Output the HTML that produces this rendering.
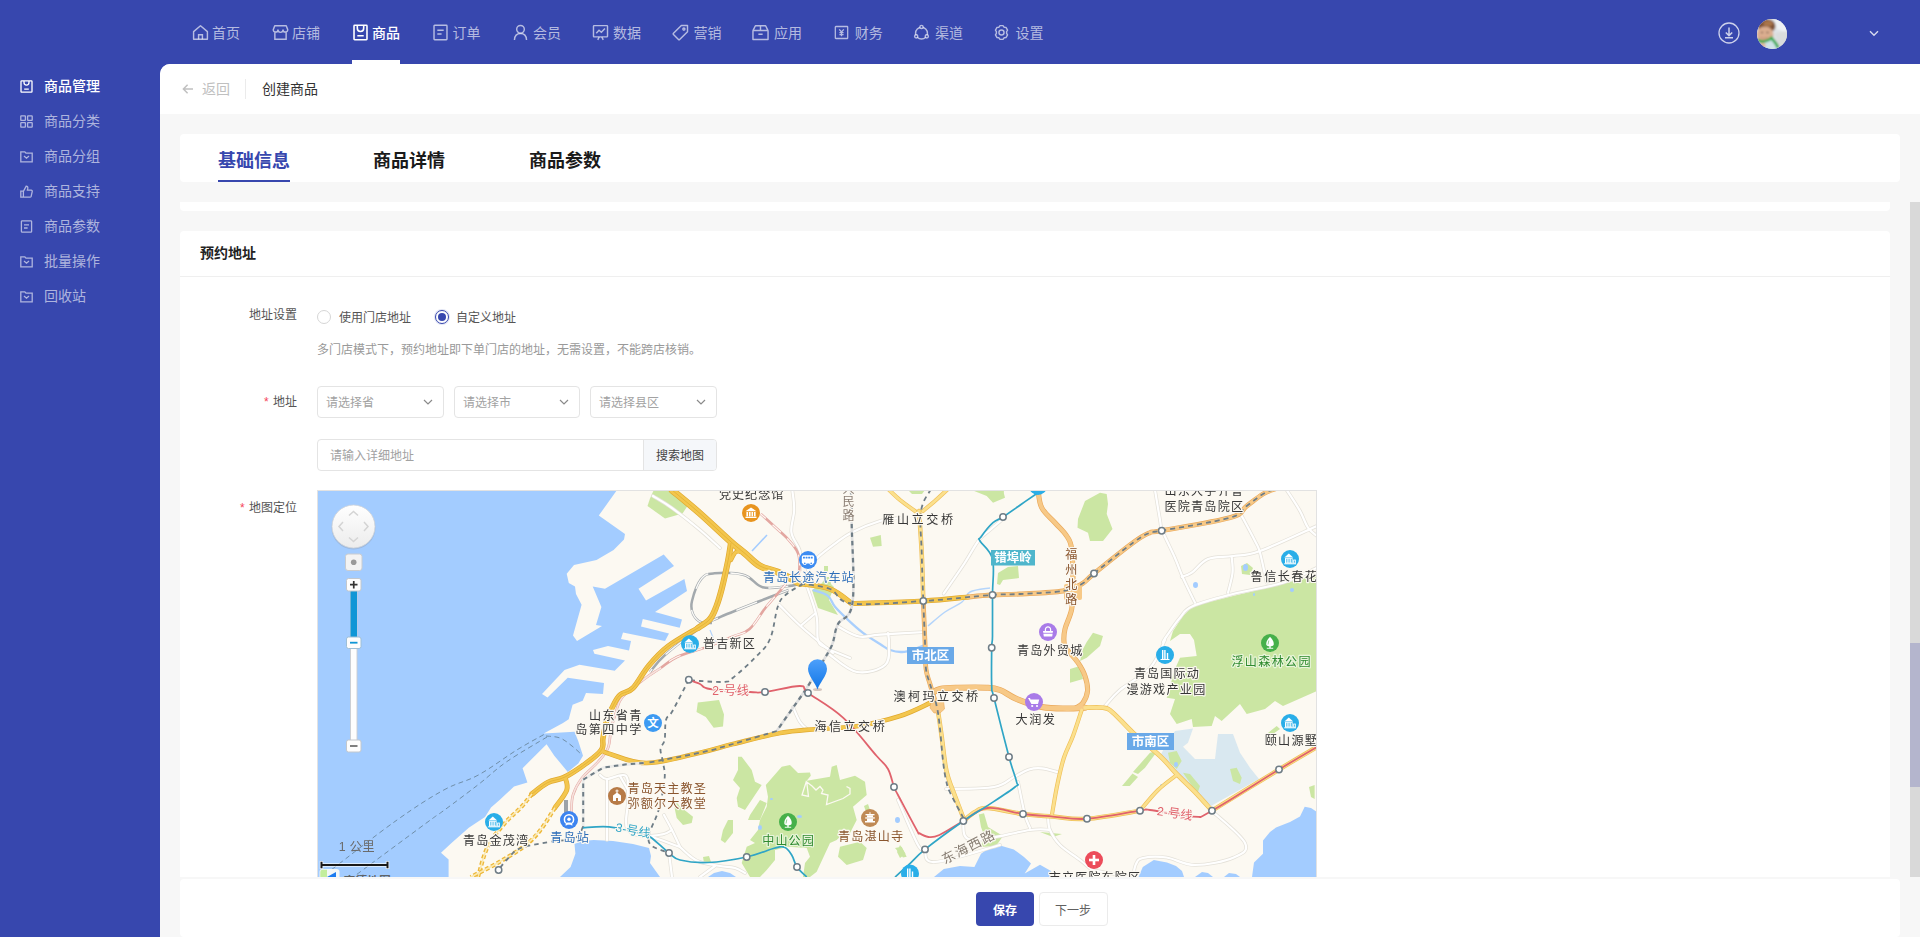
<!DOCTYPE html>
<html lang="zh-CN">
<head>
<meta charset="utf-8">
<title>创建商品</title>
<style>
*{box-sizing:border-box;margin:0;padding:0}
html,body{width:1920px;height:937px;overflow:hidden}
body{font-family:"Liberation Sans","Noto Sans CJK SC",sans-serif;background:#3747ae;position:relative;font-size:14px;color:#333}
.abs{position:absolute}
#hdr{position:absolute;left:0;top:0;width:1920px;height:64px;background:#3747ae}
#side{position:absolute;left:0;top:64px;width:160px;height:873px;background:#3747ae}
#main{position:absolute;left:160px;top:64px;width:1760px;height:873px;background:#f7f7f7;border-top-left-radius:10px;overflow:hidden}
.nav{position:absolute;top:0;height:64px;line-height:64px;color:rgba(255,255,255,.64);font-size:14px;white-space:nowrap}
.nav svg{position:absolute;left:-.5px;top:23.500px;width:17px;height:17px;fill:none;stroke:rgba(255,255,255,.64);stroke-width:1.350}
.nav span{position:absolute;left:20px;top:1px}
.nav.on{color:#fff;font-weight:500}
.nav.on svg{stroke:#fff;stroke-width:1.500}
.sitem{position:absolute;left:0;width:160px;height:35px;line-height:35px;color:rgba(255,255,255,.6);font-size:14px}
.sitem svg{position:absolute;left:20px;top:11px;width:13px;height:13px;fill:none;stroke:rgba(255,255,255,.6);stroke-width:1.300}
.sitem span{position:absolute;left:44px;top:0}
.sitem.on{color:#fff;font-weight:500}
.sitem.on svg{stroke:#fff}

.tab{position:absolute;top:84px;font-size:18px;line-height:26px;font-weight:700;color:#1a1a1a;white-space:nowrap}
.tab.on{color:#3747ae}
.lbl{position:absolute;left:0;width:137px;text-align:right;font-size:12px;line-height:20px;color:#555;white-space:nowrap}
.lbl i{font-style:normal;color:#f5455a;margin-right:1px}
.t12{position:absolute;font-size:12px;line-height:20px;white-space:nowrap}
.radio{position:absolute;width:14px;height:14px;border:1px solid #d6d6d6;border-radius:50%;background:#fff}
.radio.on{border:1px solid #3747ae;box-shadow:0 0 0 1px rgba(55,71,174,.15)}
.radio.on::after{content:"";position:absolute;left:2px;top:2px;width:8px;height:8px;border-radius:50%;background:#3747ae}
.sel{position:absolute;top:322px;width:126px;height:32px;border:1px solid #e4e4e4;border-radius:4px;background:#fff;font-size:12px;line-height:33px;padding-left:8px;color:#a2a2a2;white-space:nowrap}
.sel svg{position:absolute;right:10px;top:12px;width:10px;height:6px;fill:none;stroke:#8a8a8a;stroke-width:1.200}
</style>
</head>
<body>
<div id="hdr">
  <div class="nav" style="left:192px"><svg viewBox="0 0 16 16"><path d="M1.5 7.2 8 1.6l6.500 5.600V14.300H1.500Z" stroke-linejoin="round"/><path d="M6.200 14.300V10.200h3.600v4.100"/></svg><span>首页</span></div>
  <div class="nav" style="left:272px"><svg viewBox="0 0 16 16"><path d="M2.600 1.700h10.800l1.400 3.600a2.200 2.200 0 0 1-4.400.2 2.400 2.400 0 0 1-4.800 0 2.200 2.200 0 0 1-4.400-.2Z" stroke-linejoin="round"/><path d="M2.700 8v6.300h10.600V8"/></svg><span>店铺</span></div>
  <div class="nav on" style="left:352px"><svg viewBox="0 0 16 16"><rect x="1.900" y="1.200" width="12.200" height="13.600" rx=".6"/><path d="M5 1.600v2.400a3 3 0 0 0 6 0V1.600M5 11h6"/></svg><span>商品</span></div>
  <div class="nav" style="left:432px"><svg viewBox="0 0 16 16"><rect x="1.900" y="1.200" width="12.200" height="13.600" rx=".6"/><path d="M5 5.800h6M5 9.400h4"/></svg><span style="left:20.5px">订单</span></div>
  <div class="nav" style="left:512px"><svg viewBox="0 0 16 16"><circle cx="8" cy="5" r="3.600"/><path d="M2.300 15c.2-3.800 2.400-6.000 5.700-6.000s5.500 2.200 5.700 6.000"/></svg><span style="left:21px">会员</span></div>
  <div class="nav" style="left:592px"><svg viewBox="0 0 16 16"><rect x="1.400" y="1.500" width="13.200" height="10.600" rx=".6"/><path d="M4 8.600 6.600 5.800l2.200 2 3.400-3.600M5.400 15l1.400-2.800M10.600 15l-1.400-2.800"/></svg><span style="left:21px">数据</span></div>
  <div class="nav" style="left:672px"><svg viewBox="0 0 16 16"><path d="M8.800 1.400h5.800v5.800l-7.400 7.400a.8.800 0 0 1-1.100 0L1.400 9.900a.8.800 0 0 1 0-1.100Z" stroke-linejoin="round"/><circle cx="11.200" cy="4.800" r="1"/></svg><span style="left:21.5px">营销</span></div>
  <div class="nav" style="left:752px"><svg viewBox="0 0 16 16"><path d="M.9 6.200h14.200v8.400H.9ZM.9 6.200 3.200 1.600h9.600l2.300 4.600M8 1.600v4.600M6 9.600h4" stroke-linejoin="round"/></svg><span style="left:22px">应用</span></div>
  <div class="nav" style="left:834px"><svg viewBox="0 0 16 16" style="width:15px;height:15px;top:24.500px"><rect x="1.400" y="1.600" width="13.200" height="12.800" rx=".6"/><path d="M5.600 4.600 8 7.400l2.400-2.800M8 7.400v4.600M5.800 8.200h4.400M5.800 10.200h4.400"/></svg><span style="left:20.700px">财务</span></div>
  <div class="nav" style="left:913px"><svg viewBox="0 0 16 16"><circle cx="8" cy="8.600" r="5.600"/><circle cx="8" cy="2.800" r="1.500" fill="#3747ae"/><circle cx="3" cy="11.600" r="1.500" fill="#3747ae"/><circle cx="13" cy="11.600" r="1.500" fill="#3747ae"/></svg><span style="left:22px">渠道</span></div>
  <div class="nav" style="left:993px"><svg viewBox="0 0 16 16"><path d="M6.600 1.500h2.800l1 1.500 1.800.2 1.500 2.500-.9 1.500v1.600l.9 1.500-1.500 2.500-1.800.2-1 1.500H6.600l-1-1.500-1.800-.2-1.500-2.500.9-1.500V7.200l-.9-1.500 1.500-2.500 1.800-.2Z" stroke-linejoin="round"/><circle cx="8" cy="8" r="2.400"/></svg><span style="left:22.500px">设置</span></div>
  <div class="abs" style="left:352px;top:60px;width:48px;height:4px;background:#fff"></div>
  <svg class="abs" style="left:1718px;top:22px" width="22" height="22" viewBox="0 0 22 22" fill="none" stroke="rgba(255,255,255,.75)" stroke-width="1.300"><circle cx="11" cy="11" r="10"/><path d="M11 5.500v8M7.800 10.500 11 13.600l3.200-3.100M7 15.800h8" stroke-width="1.500"/></svg>
  <svg class="abs" style="left:1757px;top:19px" width="30" height="30" viewBox="0 0 30 30"><defs><clipPath id="av"><circle cx="15" cy="15" r="15"/></clipPath><filter id="bl" x="-10%" y="-10%" width="120%" height="120%"><feGaussianBlur stdDeviation=".9"/></filter></defs><g clip-path="url(#av)"><rect width="30" height="30" fill="#dde1e4"/><g filter="url(#bl)"><rect x="-2" y="-2" width="34" height="34" fill="#dfe3e6"/><path d="M16 -2 L32 -2 L32 14 L20 10Z" fill="#eef1f5"/><path d="M18 14 L32 12 L32 32 L22 32Z" fill="#d9dcdc"/><ellipse cx="9.500" cy="7" rx="9" ry="7" fill="#7b5036"/><ellipse cx="11" cy="4.500" rx="5" ry="3" fill="#a9744a"/><ellipse cx="8" cy="15.500" rx="8.500" ry="8" fill="#dcae90"/><ellipse cx="5" cy="13.500" rx="1.200" ry=".8" fill="#5a4434"/><ellipse cx="10.500" cy="13.500" rx="1.200" ry=".8" fill="#5a4434"/><path d="M3 18.500 q4 2 8 0" stroke="#b9806a" stroke-width=".8" fill="none"/><path d="M5 25 L15 20 L22 30 L8 31Z" fill="#cfe4e8"/><path d="M0 21 C5 24 11 22 14.500 19 C17 22 20 25 21 29" stroke="#22a744" stroke-width="2.800" fill="none"/><ellipse cx="5.500" cy="26.500" rx="3.200" ry="2.800" fill="#e2b79c"/></g></g></svg>
  <svg class="abs" style="left:1869px;top:30px" width="10" height="7" viewBox="0 0 10 7" fill="none" stroke="rgba(255,255,255,.8)" stroke-width="1.400"><path d="M1 1.200 5 5.200l4-4"/></svg>
</div>
<div id="side">
  <div class="sitem on" style="top:5px"><svg viewBox="0 0 13 13"><rect x="1" y=".8" width="11" height="11.400" rx=".6"/><path d="M4 1v1.600a2.500 2.500 0 0 0 5 0V1M4.200 9.200h4.600"/></svg><span>商品管理</span></div>
  <div class="sitem" style="top:40px"><svg viewBox="0 0 13 13"><rect x=".8" y=".8" width="4.600" height="4.600" rx=".5"/><rect x="7.600" y=".8" width="4.600" height="4.600" rx=".5"/><rect x=".8" y="7.600" width="4.600" height="4.600" rx=".5"/><rect x="7.600" y="7.600" width="4.600" height="4.600" rx=".5"/></svg><span>商品分类</span></div>
  <div class="sitem" style="top:75px"><svg viewBox="0 0 13 13"><path d="M.8 1.800h4l1.200 1.400h6.200v8.600H.8ZM4 6.000l2.500 2.200L9 6.000"/></svg><span>商品分组</span></div>
  <div class="sitem" style="top:110px"><svg viewBox="0 0 13 13"><path d="M.8 6.200h2.600v6H.8ZM3.400 6.400 6.200 1.200c1.200 0 1.800.8 1.600 2L7.400 5.200h3.800c.8 0 1.200.6 1 1.400l-1 4.600c-.2.700-.6 1-1.300 1H3.400"/></svg><span>商品支持</span></div>
  <div class="sitem" style="top:145px"><svg viewBox="0 0 13 13"><rect x="1.400" y=".8" width="10.200" height="11.400" rx=".8"/><path d="M4 4.800h5M4 8.000h3.600"/></svg><span>商品参数</span></div>
  <div class="sitem" style="top:180px"><svg viewBox="0 0 13 13"><path d="M.8 1.800h4l1.200 1.400h6.200v8.600H.8ZM4 6.000l2.500 2.200L9 6.000"/></svg><span>批量操作</span></div>
  <div class="sitem" style="top:215px"><svg viewBox="0 0 13 13"><path d="M.8 1.800h4l1.200 1.400h6.200v8.600H.8ZM4 6.000l2.500 2.200L9 6.000"/></svg><span>回收站</span></div>
</div>
<div id="main">
  <div class="abs" style="left:0;top:0;width:1760px;height:50px;background:#fff"></div>
  <svg class="abs" style="left:22px;top:19px" width="12" height="12" viewBox="0 0 12 12" fill="none" stroke="#c0c0c0" stroke-width="1.500"><path d="M11 6H1.600M5.600 1.800 1.400 6l4.200 4.200"/></svg>
  <div class="abs" style="left:42px;top:15px;font-size:14px;line-height:20px;color:#c0c0c0">返回</div>
  <div class="abs" style="left:85px;top:15px;width:1px;height:20px;background:#ebebeb"></div>
  <div class="abs" style="left:102px;top:15px;font-size:14px;line-height:20px;color:#333">创建商品</div>

  <div class="abs" style="left:20px;top:70px;width:1720px;height:48px;background:#fff;border-radius:4px"></div>
  <div class="tab on" style="left:58px">基础信息</div>
  <div class="tab" style="left:213px">商品详情</div>
  <div class="tab" style="left:369px">商品参数</div>
  <div class="abs" style="left:58px;top:116px;width:72px;height:2px;background:#3747ae"></div>

  <div class="abs" style="left:20px;top:138px;width:1710px;height:9px;background:#fff;border-radius:0 0 4px 4px"></div>
  <div class="abs" style="left:20px;top:167px;width:1710px;height:660px;background:#fff;border-radius:4px 4px 0 0"></div>
  <div class="abs" style="left:40px;top:179px;font-size:14px;line-height:20px;font-weight:700;color:#222">预约地址</div>
  <div class="abs" style="left:20px;top:212px;width:1710px;height:1px;background:#efefef"></div>

  <div class="lbl" style="top:241px">地址设置</div>
  <div class="radio" style="left:157px;top:246px"></div>
  <div class="t12" style="left:179px;top:244px;color:#555">使用门店地址</div>
  <div class="radio on" style="left:275px;top:246px"></div>
  <div class="t12" style="left:296px;top:244px;color:#555">自定义地址</div>
  <div class="t12" style="left:157px;top:276px;color:#999">多门店模式下，预约地址即下单门店的地址，无需设置，不能跨店核销。</div>

  <div class="lbl" style="top:328px"><i>*</i> 地址</div>
  <div class="sel" style="left:157px;width:127px">请选择省<svg viewBox="0 0 10 6"><path d="M1 1l4 4 4-4"/></svg></div>
  <div class="sel" style="left:294px;width:126px">请选择市<svg viewBox="0 0 10 6"><path d="M1 1l4 4 4-4"/></svg></div>
  <div class="sel" style="left:430px;width:127px">请选择县区<svg viewBox="0 0 10 6"><path d="M1 1l4 4 4-4"/></svg></div>

  <div class="abs" style="left:157px;top:375px;width:400px;height:32px;border:1px solid #e4e4e4;border-radius:4px;background:#fff;overflow:hidden">
    <div class="t12" style="left:12px;top:6px;color:#a2a2a2">请输入详细地址</div>
    <div class="abs" style="left:325px;top:0;width:73px;height:30px;background:#f5f7fa;border-left:1px solid #e4e4e4;font-size:12px;line-height:32px;text-align:center;color:#444">搜索地图</div>
  </div>

  <div class="lbl" style="top:434px"><i>*</i> 地图定位</div>
  <div class="abs" style="left:157px;top:426px;width:1000px;height:387px;overflow:hidden;background:#fcf9f2">
<svg width="1000" height="387" viewBox="317 490 1000 387" style="position:absolute;left:0;top:0;font-family:'Liberation Sans','Noto Sans CJK SC',sans-serif">
<rect x="317" y="490" width="1000" height="387" fill="#fcf9f2"/>
<path d="M317.0 490.0 L617.0 490.0 L598.8 515.5 L625.0 534.0 L624.0 539.6 L613.6 550.0 L596.5 560.0 L574.0 565.0 L566.7 573.7 L568.8 583.0 L575.0 586.5 L576.0 594.0 L581.6 604.7 L573.0 635.6 L577.0 641.0 L602.0 626.0 L596.0 625.0 L601.4 607.0 L592.7 586.5 L605.0 588.7 L663.7 554.5 L674.0 566.0 L638.5 588.7 L646.0 600.4 L684.4 579.0 L687.0 591.0 L655.0 612.0 L682.0 619.6 L679.7 627.7 L642.8 619.0 L641.0 626.4 L669.0 633.5 L665.0 641.0 L623.0 632.4 L621.0 639.0 L631.0 641.0 L629.0 650.5 L608.0 646.0 L593.0 650.0 L594.4 653.7 L625.0 660.5 L614.7 670.8 L579.5 664.8 L564.5 670.0 L542.0 694.0 L547.5 697.5 L567.7 677.8 L604.0 683.0 L603.0 694.0 L586.0 693.0 L582.7 700.7 L572.6 704.8 L568.7 719.2 L563.0 723.0 L543.7 733.6 L574.5 731.7 L578.3 741.3 L583.0 755.7 L578.3 763.4 L567.8 772.0 L554.3 755.7 L546.6 744.2 L522.6 768.2 L527.4 782.6 L514.0 786.5 L499.6 800.0 L491.0 807.6 L485.0 817.0 L468.8 827.8 L451.5 843.0 L441.0 852.7 L448.6 859.5 L448.6 877.0 L317.0 877.0Z" fill="#a3ccff"/>
<path d="M574.5 844.0 L582.0 841.0 L593.7 840.0 L613.0 841.0 L633.0 844.0 L649.0 848.0 L651.0 856.0 L650.0 863.0 L660.0 877.0 L560.0 877.0 L570.6 867.0 L575.4 853.7Z" fill="#a3ccff"/>
<path d="M708 877 L714 873 L722 871 L730 873 L736 877Z" fill="#a3ccff"/>
<path d="M934.0 877.0 L943.8 869.0 L960.0 866.0 L974.4 867.0 L981.0 853.8 L989.0 848.0 L998.4 845.0 L1013.8 849.4 L1024.0 857.0 L1031.0 863.6 L1024.7 873.5 L1040.0 864.7 L1051.0 871.0 L1053.0 877.0Z" fill="#a3ccff"/>
<path d="M1138.5 877.0 L1142.8 867.0 L1153.8 860.0 L1167.0 862.5 L1176.0 866.0 L1182.0 871.0 L1184.0 877.0Z" fill="#a3ccff"/>
<path d="M1195 877 L1202 872 L1208 873 L1213 877Z" fill="#a3ccff"/>
<path d="M1224 877 L1229 873 L1236 874 L1240 877Z" fill="#a3ccff"/>
<path d="M1252.0 877.0 L1254.0 862.5 L1263.0 853.8 L1263.0 840.6 L1270.0 832.0 L1276.0 827.5 L1290.0 822.0 L1300.0 816.6 L1304.7 806.7 L1311.0 808.0 L1317.0 812.0 L1317.0 877.0Z" fill="#a3ccff"/>
<path d="M1175.0 731.0 L1193.0 728.5 L1188.0 742.7 L1183.0 746.8 L1195.0 759.0 L1215.0 759.0 L1218.0 734.0 L1233.0 734.0 L1240.0 752.7 L1250.0 767.7 L1259.0 779.0 L1211.0 806.0 L1195.0 792.0 L1176.7 774.0 L1160.0 756.0 L1166.0 745.0Z" fill="#d9e8f0"/>
<path d="M653.8 490.0 L672.5 490.0 L687.5 506.0 L682.5 513.5 L665.0 518.5 L647.5 506.0 L650.0 498.5Z" fill="#cbe6a3"/>
<path d="M870.0 537.7 L880.8 535.0 L881.7 546.0 L873.0 546.8Z" fill="#cbe6a3"/>
<path d="M812.0 590.0 L822.0 583.0 L826.0 577.0 L830.0 577.0 L831.0 584.0 L834.0 587.0 L829.0 600.0 L838.0 615.0 L818.0 608.0Z" fill="#cbe6a3"/>
<path d="M824.0 566.0 L828.0 566.0 L828.0 572.0 L824.0 572.0Z" fill="#cbe6a3"/>
<path d="M971.7 490.0 L1003.0 490.0 L1005.0 497.7 L993.0 502.7 L986.7 496.0Z" fill="#cbe6a3"/>
<path d="M908.0 490.0 L925.0 490.0 L922.0 494.0 L912.0 494.0Z" fill="#cbe6a3"/>
<path d="M998.0 573.0 L1008.0 567.0 L1018.0 566.0 L1019.0 578.0 L1003.0 580.0 L1000.0 585.0 L997.0 584.0Z" fill="#cbe6a3"/>
<path d="M1085.0 501.0 L1100.0 492.7 L1106.7 494.0 L1108.0 504.0 L1106.7 514.0 L1112.5 529.0 L1103.0 541.0 L1090.0 541.0 L1088.0 532.7 L1077.5 527.7 L1078.0 519.0Z" fill="#cbe6a3"/>
<path d="M1000.0 490.0 L1004.0 490.0 L1003.0 497.0 L1000.0 499.0Z" fill="#cbe6a3"/>
<path d="M1317.0 574.0 L1283.0 584.0 L1233.0 596.0 L1193.0 606.0 L1183.0 616.0 L1173.0 631.0 L1170.0 641.0 L1180.0 634.0 L1190.0 634.0 L1194.0 640.0 L1196.7 656.0 L1180.0 657.7 L1175.0 669.0 L1166.7 697.7 L1175.0 699.0 L1170.0 714.0 L1176.7 724.0 L1191.7 719.0 L1193.0 727.0 L1211.7 726.0 L1215.0 716.0 L1221.7 721.0 L1240.0 704.0 L1246.7 714.0 L1265.0 709.0 L1275.0 701.0 L1283.0 706.0 L1317.0 691.0Z" fill="#cbe6a3"/>
<path d="M765.8 785.0 L781.7 766.7 L790.0 765.0 L798.0 773.0 L810.0 772.5 L810.8 775.8 L806.7 780.8 L830.0 776.7 L831.7 766.7 L836.7 765.0 L840.0 780.0 L855.0 775.8 L865.0 781.7 L866.7 795.0 L853.0 806.7 L856.7 820.0 L850.0 833.0 L840.0 836.7 L836.7 840.0 L830.0 843.0 L816.7 871.7 L810.0 877.0 L803.0 877.0 L805.0 863.0 L810.0 856.7 L806.7 848.0 L788.0 846.7 L775.0 850.0 L775.0 860.0 L766.7 870.0 L760.0 877.0 L750.0 877.0 L741.7 863.0 L746.7 846.7 L755.0 843.0 L750.0 840.0 L758.0 830.0 L760.0 820.0 L766.7 806.7 L768.0 796.7Z" fill="#cbe6a3"/>
<path d="M738.0 756.7 L741.7 756.7 L751.7 770.0 L755.0 781.7 L761.7 785.0 L755.0 795.0 L745.0 810.0 L738.0 806.7 L736.7 798.0 L740.0 788.0 L733.0 780.0 L738.0 770.0Z" fill="#cbe6a3"/>
<path d="M760.0 800.0 L766.7 803.0 L760.0 820.0 L748.0 820.0 L750.0 815.0Z" fill="#cbe6a3"/>
<path d="M728.0 820.0 L733.0 820.0 L733.0 833.0 L725.0 843.0 L720.8 840.0 L723.0 830.0Z" fill="#cbe6a3"/>
<path d="M673.0 796.7 L680.0 806.7 L686.7 811.7 L693.0 816.7 L691.7 823.0 L683.0 825.0 L676.7 818.0 L675.0 810.0Z" fill="#cbe6a3"/>
<path d="M840.0 846.7 L860.0 841.7 L866.7 848.0 L863.0 860.0 L846.7 865.0 L838.0 856.7Z" fill="#cbe6a3"/>
<path d="M895.0 848.0 L901.7 846.7 L906.7 856.7 L903.0 857.5Z" fill="#cbe6a3"/>
<path d="M900.0 845.0 L905.5 853.8 L900.0 858.0 L897.0 852.0Z" fill="#cbe6a3"/>
<path d="M864.0 806.0 L868.0 804.0 L870.0 810.0 L866.0 812.0Z" fill="#cbe6a3"/>
<path d="M697.8 702.6 L719.0 700.0 L724.0 714.5 L723.0 726.5 L713.7 727.8 L705.8 717.0 L696.5 712.0Z" fill="#cbe6a3"/>
<path d="M1150.0 752.7 L1157.5 751.0 L1145.0 767.7 L1138.0 774.0 L1133.0 772.0Z" fill="#cbe6a3"/>
<path d="M1132.5 773.5 L1138.0 777.0 L1129.7 786.0 L1122.0 786.0Z" fill="#cbe6a3"/>
<path d="M1168.0 752.7 L1176.7 751.0 L1181.7 761.0 L1176.7 769.0 L1170.0 762.7Z" fill="#cbe6a3"/>
<path d="M1183.0 772.7 L1190.0 774.0 L1200.0 786.0 L1198.0 792.0 L1192.0 786.0Z" fill="#cbe6a3"/>
<path d="M1230.0 769.0 L1236.7 767.7 L1241.7 777.7 L1240.0 784.0 L1233.0 781.0Z" fill="#cbe6a3"/>
<path d="M1266.7 734.0 L1276.7 726.0 L1280.0 729.0 L1270.0 736.0Z" fill="#cbe6a3"/>
<path d="M1309.0 787.0 L1314.6 785.0 L1314.6 799.0 L1311.0 797.0Z" fill="#cbe6a3"/>
<path d="M978.8 814.4 L984.0 813.3 L988.0 827.0 L1003.0 836.0 L996.0 846.0 L980.0 847.0 L985.0 838.0 L981.0 827.0Z" fill="#cbe6a3"/>
<path d="M1040.0 832.0 L1062.0 834.0 L1053.0 837.0Z" fill="#cbe6a3"/>
<path d="M1093.0 632.7 L1103.0 636.0 L1100.0 646.0 L1086.7 657.7 L1080.0 661.0 L1083.0 649.0 L1086.7 642.0Z" fill="#cbe6a3"/>
<path d="M1070.0 669.0 L1080.0 666.0 L1083.0 679.0 L1070.0 682.7Z" fill="#cbe6a3"/>
<path d="M703.0 857.0 L709.0 856.0 L711.0 862.0 L704.0 863.0Z" fill="#cbe6a3"/>
<path d="M1241.0 566.0 L1247.0 563.0 L1253.0 568.0 L1250.0 575.0 L1242.0 574.0Z" fill="#cbe6a3"/>
<path d="M806.500 781 L802 795 L808.500 796.500 L806.700 782 L812 786 L816 790 L820 786.500 L823 790 L821.500 793.500 L828 795 L826.500 804.500 L843 798.500 L850 794 L850 788.500 L846.500 786.500" fill="none" stroke="#fcf9f2" stroke-width="1.300"/>
<ellipse cx="1245.5" cy="567.5" rx="2.5" ry="3.5" fill="#a3ccff"/>
<ellipse cx="1195.5" cy="585.0" rx="2.5" ry="3.0" fill="#a3ccff"/>
<ellipse cx="1292.0" cy="590.0" rx="2.0" ry="2.0" fill="#a3ccff"/>
<ellipse cx="1176.0" cy="764.5" rx="2.0" ry="2.5" fill="#a3ccff"/>
<ellipse cx="1161.5" cy="785.5" rx="1.5" ry="1.5" fill="#a3ccff"/>
<ellipse cx="760.0" cy="827.5" rx="2.0" ry="2.5" fill="#a3ccff"/>
<ellipse cx="771.5" cy="799.0" rx="1.5" ry="1.0" fill="#a3ccff"/>
<ellipse cx="799.5" cy="816.5" rx="2.5" ry="1.5" fill="#a3ccff"/>
<ellipse cx="897.5" cy="820.0" rx="2.5" ry="3.0" fill="#a3ccff"/>
<ellipse cx="1254.0" cy="594.5" rx="1.0" ry="1.5" fill="#a3ccff"/>
<path d="M752 551 L767 535" stroke="#a3ccff" stroke-width="1.500" fill="none"/>
<path d="M812.8 590.0 C815.5 591.0 823.6 592.6 827.6 595.6 C831.6 598.6 831.3 602.4 835.0 606.8 C838.7 611.2 843.0 615.1 848.0 619.8 C853.0 624.5 857.2 628.4 863.0 632.8 C868.8 637.2 875.1 640.9 880.0 644.0 C884.9 647.1 886.0 648.6 890.0 650.0 C894.0 651.4 897.5 652.2 902.0 652.0 C906.5 651.8 910.9 650.3 915.0 649.0 C919.1 647.7 923.2 645.7 925.0 645.0" stroke="#a9cffd" stroke-width="2.300" fill="none"/>
<path d="M928.0 626.0 C931.1 623.5 938.9 616.3 945.0 612.0 C951.1 607.7 957.5 605.6 962.0 602.0 C966.5 598.4 965.0 594.5 970.0 592.0 C975.0 589.5 986.4 588.7 990.0 588.0" stroke="#b5d5fb" stroke-width="1.500" fill="none"/>
<path d="M710 630 L714 640 L722 648" stroke="#b5d5fb" stroke-width="1.200" fill="none"/>
<path d="M653.0 496.0 C656.4 498.2 663.5 501.9 672.0 508.0 C680.5 514.1 691.4 522.8 700.0 530.0 C708.6 537.2 716.4 544.8 720.0 548.0" stroke="#e4e1d9" stroke-width="3.600" fill="none" stroke-linejoin="round" stroke-linecap="round"/>
<path d="M792.3 490.0 C792.6 493.6 794.4 502.4 794.2 510.0 C794.0 517.6 790.4 525.0 791.4 532.4 C792.4 539.8 798.3 544.2 799.8 551.0 C801.3 557.8 800.0 566.6 800.0 570.0" stroke="#e4e1d9" stroke-width="3.600" fill="none" stroke-linejoin="round" stroke-linecap="round"/>
<path d="M808.0 570.0 C809.5 567.9 811.6 563.2 816.5 558.4 C821.4 553.6 828.6 548.3 835.0 543.6 C841.4 538.9 843.7 536.5 851.8 532.4 C859.9 528.3 871.3 523.6 880.0 521.0 C888.7 518.4 896.4 518.5 900.0 518.0" stroke="#e4e1d9" stroke-width="3.600" fill="none" stroke-linejoin="round" stroke-linecap="round"/>
<path d="M807.0 586.3 C808.7 591.6 814.5 606.3 816.5 616.0 C818.5 625.7 816.3 634.3 818.0 640.0 C819.7 645.7 820.0 644.4 825.8 647.6 C831.6 650.8 845.6 656.1 850.0 658.0" stroke="#e4e1d9" stroke-width="3.600" fill="none" stroke-linejoin="round" stroke-linecap="round"/>
<path d="M779.3 604.9 C783.3 608.9 791.9 618.3 801.6 627.0 C811.3 635.7 827.3 648.3 833.0 653.0" stroke="#e4e1d9" stroke-width="3.600" fill="none" stroke-linejoin="round" stroke-linecap="round"/>
<path d="M838.8 627.0 C842.4 628.7 851.6 635.1 859.0 636.5 C866.4 637.9 868.1 635.4 880.0 634.6 C891.9 633.8 916.9 632.5 925.0 632.0" stroke="#e4e1d9" stroke-width="3.600" fill="none" stroke-linejoin="round" stroke-linecap="round"/>
<path d="M801.6 625.0 L814.6 614.0" stroke="#e4e1d9" stroke-width="3.600" fill="none" stroke-linejoin="round" stroke-linecap="round"/>
<path d="M888.0 633.0 C888.2 635.2 889.5 639.2 889.0 645.0 C888.5 650.8 890.8 660.1 885.0 665.0 C879.2 669.9 866.9 673.8 857.0 672.0 C847.1 670.2 834.9 658.1 830.0 655.0" stroke="#e4e1d9" stroke-width="3.600" fill="none" stroke-linejoin="round" stroke-linecap="round"/>
<path d="M793.0 707.0 C794.3 709.7 797.3 717.9 800.0 722.0 C802.7 726.1 806.6 728.6 808.0 730.0" stroke="#e4e1d9" stroke-width="3.600" fill="none" stroke-linejoin="round" stroke-linecap="round"/>
<path d="M1003.0 519.0 C1000.7 521.0 994.3 526.2 990.0 530.0 C985.7 533.8 983.7 533.9 979.0 540.0 C974.3 546.1 970.4 554.3 964.0 564.0 C957.6 573.7 947.3 588.4 943.6 593.7" stroke="#e4e1d9" stroke-width="3.600" fill="none" stroke-linejoin="round" stroke-linecap="round"/>
<path d="M1155.0 490.0 C1155.9 495.4 1158.7 512.6 1160.0 520.0 C1161.3 527.4 1159.8 524.2 1162.5 531.0 C1165.2 537.8 1171.3 549.6 1175.0 558.0 C1178.7 566.4 1179.4 569.7 1183.0 577.7 C1186.6 585.7 1192.8 598.2 1195.0 602.7" stroke="#e4e1d9" stroke-width="3.600" fill="none" stroke-linejoin="round" stroke-linecap="round"/>
<path d="M1240.0 512.7 C1242.7 517.8 1251.4 533.8 1255.0 541.0 C1258.6 548.2 1257.9 545.2 1260.0 552.7 C1262.1 560.2 1265.5 577.3 1266.7 582.7" stroke="#e4e1d9" stroke-width="3.600" fill="none" stroke-linejoin="round" stroke-linecap="round"/>
<path d="M1286.7 490.0 C1289.1 493.8 1296.2 504.2 1300.0 511.0 C1303.8 517.8 1304.9 523.2 1308.0 527.7 C1311.1 532.2 1315.4 534.5 1317.0 536.0" stroke="#e4e1d9" stroke-width="3.600" fill="none" stroke-linejoin="round" stroke-linecap="round"/>
<path d="M1317.0 526.0 C1306.7 530.5 1275.1 545.6 1260.0 551.0 C1244.9 556.4 1242.4 554.6 1233.0 556.0 C1223.6 557.4 1215.4 556.0 1208.0 559.0 C1200.6 562.0 1196.4 569.5 1191.7 572.7 C1187.0 575.9 1183.5 576.1 1181.7 576.8" stroke="#e4e1d9" stroke-width="3.600" fill="none" stroke-linejoin="round" stroke-linecap="round"/>
<path d="M1317.0 567.7 C1310.9 570.4 1298.1 578.0 1283.0 582.7 C1267.9 587.4 1249.2 589.8 1233.0 594.0 C1216.8 598.2 1202.5 601.7 1193.0 606.0 C1183.5 610.3 1184.7 612.3 1180.0 617.7 C1175.3 623.1 1169.8 631.6 1166.7 636.0 C1163.6 640.4 1163.7 640.9 1163.0 642.0" stroke="#e4e1d9" stroke-width="3.600" fill="none" stroke-linejoin="round" stroke-linecap="round"/>
<path d="M1231.7 557.0 C1231.8 559.9 1233.2 566.6 1232.5 573.0 C1231.8 579.4 1228.8 589.2 1228.0 592.7" stroke="#e4e1d9" stroke-width="3.600" fill="none" stroke-linejoin="round" stroke-linecap="round"/>
<path d="M1105.0 706.0 C1107.7 703.1 1111.9 696.8 1120.0 690.0 C1128.1 683.2 1141.9 677.0 1150.0 668.0 C1158.1 659.0 1162.3 645.0 1165.0 640.0" stroke="#e4e1d9" stroke-width="3.600" fill="none" stroke-linejoin="round" stroke-linecap="round"/>
<path d="M946.0 789.0 C954.6 788.6 981.8 789.2 994.0 787.0 C1006.2 784.8 1007.7 780.1 1014.0 777.0 C1020.3 773.9 1024.0 771.0 1029.0 769.5 C1034.0 768.0 1037.0 767.9 1042.0 768.4 C1047.0 768.9 1054.3 771.4 1057.0 772.0" stroke="#e4e1d9" stroke-width="3.600" fill="none" stroke-linejoin="round" stroke-linecap="round"/>
<path d="M1018.0 782.0 C1019.3 787.9 1022.8 806.7 1025.0 815.0 C1027.2 823.3 1029.1 825.7 1030.0 828.0" stroke="#e4e1d9" stroke-width="3.600" fill="none" stroke-linejoin="round" stroke-linecap="round"/>
<path d="M925.0 849.0 C926.8 851.3 921.5 862.7 935.0 862.0 C948.5 861.3 988.3 848.1 1000.0 845.0" stroke="#e4e1d9" stroke-width="3.600" fill="none" stroke-linejoin="round" stroke-linecap="round"/>
<path d="M963.0 822.0 C964.6 825.2 959.9 838.6 972.0 840.0 C984.1 841.4 1016.0 831.8 1030.0 830.0 C1044.0 828.2 1046.4 830.0 1050.0 830.0" stroke="#e4e1d9" stroke-width="3.600" fill="none" stroke-linejoin="round" stroke-linecap="round"/>
<path d="M1048.0 816.0 C1048.4 818.5 1047.8 824.8 1050.0 830.0 C1052.2 835.2 1054.6 839.6 1060.0 845.0 C1065.4 850.4 1074.2 855.5 1080.0 860.0 C1085.8 864.5 1089.8 868.2 1092.0 870.0" stroke="#e4e1d9" stroke-width="3.600" fill="none" stroke-linejoin="round" stroke-linecap="round"/>
<path d="M1092.0 870.0 L1130.0 877.0" stroke="#e4e1d9" stroke-width="3.600" fill="none" stroke-linejoin="round" stroke-linecap="round"/>
<path d="M1133.0 877.0 C1133.5 874.7 1134.2 867.4 1136.0 864.0 C1137.8 860.6 1137.5 859.2 1143.0 858.0 C1148.5 856.8 1157.1 856.2 1166.5 857.5 C1175.9 858.8 1182.9 865.0 1195.0 865.0 C1207.1 865.0 1224.7 861.5 1233.7 857.5 C1242.7 853.5 1248.9 851.4 1245.0 843.0 C1241.1 834.6 1217.9 816.8 1212.0 811.0" stroke="#e4e1d9" stroke-width="3.600" fill="none" stroke-linejoin="round" stroke-linecap="round"/>
<path d="M898.0 800.0 C901.6 808.1 913.1 836.2 918.0 845.0 C922.9 853.8 923.7 848.3 925.0 849.0" stroke="#e4e1d9" stroke-width="3.600" fill="none" stroke-linejoin="round" stroke-linecap="round"/>
<path d="M600.0 775.0 C601.3 775.7 602.3 778.8 607.0 779.0 C611.7 779.2 622.2 772.2 626.0 776.0 C629.8 779.8 627.6 790.3 628.0 800.0 C628.4 809.7 623.1 823.2 628.0 830.0 C632.9 836.8 645.6 834.9 655.0 838.0 C664.4 841.1 675.5 845.4 680.0 847.0" stroke="#e4e1d9" stroke-width="3.600" fill="none" stroke-linejoin="round" stroke-linecap="round"/>
<path d="M607.0 779.0 L607.0 840.0" stroke="#e4e1d9" stroke-width="3.600" fill="none" stroke-linejoin="round" stroke-linecap="round"/>
<path d="M628.0 790.0 L620.0 776.0" stroke="#e4e1d9" stroke-width="3.600" fill="none" stroke-linejoin="round" stroke-linecap="round"/>
<path d="M669.0 853.0 L672.0 877.0" stroke="#e4e1d9" stroke-width="3.600" fill="none" stroke-linejoin="round" stroke-linecap="round"/>
<path d="M680.0 847.0 C681.8 848.6 686.4 853.3 690.0 856.0 C693.6 858.7 694.6 860.2 700.0 862.0 C705.4 863.8 713.7 864.9 720.0 866.0 C726.3 867.1 730.5 866.7 735.0 868.0 C739.5 869.3 743.2 872.1 745.0 873.0" stroke="#e4e1d9" stroke-width="3.600" fill="none" stroke-linejoin="round" stroke-linecap="round"/>
<path d="M700.0 877.0 L715.0 866.0" stroke="#e4e1d9" stroke-width="3.600" fill="none" stroke-linejoin="round" stroke-linecap="round"/>
<path d="M664.0 815.0 C665.4 817.7 669.1 824.2 672.0 830.0 C674.9 835.8 678.6 843.9 680.0 847.0" stroke="#e4e1d9" stroke-width="3.600" fill="none" stroke-linejoin="round" stroke-linecap="round"/>
<path d="M650.0 836.0 C652.5 835.6 660.0 835.1 664.0 834.0 C668.0 832.9 670.6 830.7 672.0 830.0" stroke="#e4e1d9" stroke-width="3.600" fill="none" stroke-linejoin="round" stroke-linecap="round"/>
<path d="M653.0 496.0 C656.4 498.2 663.5 501.9 672.0 508.0 C680.5 514.1 691.4 522.8 700.0 530.0 C708.6 537.2 716.4 544.8 720.0 548.0" stroke="#ffffff" stroke-width="2.200" fill="none" stroke-linejoin="round" stroke-linecap="round"/>
<path d="M792.3 490.0 C792.6 493.6 794.4 502.4 794.2 510.0 C794.0 517.6 790.4 525.0 791.4 532.4 C792.4 539.8 798.3 544.2 799.8 551.0 C801.3 557.8 800.0 566.6 800.0 570.0" stroke="#ffffff" stroke-width="2.200" fill="none" stroke-linejoin="round" stroke-linecap="round"/>
<path d="M808.0 570.0 C809.5 567.9 811.6 563.2 816.5 558.4 C821.4 553.6 828.6 548.3 835.0 543.6 C841.4 538.9 843.7 536.5 851.8 532.4 C859.9 528.3 871.3 523.6 880.0 521.0 C888.7 518.4 896.4 518.5 900.0 518.0" stroke="#ffffff" stroke-width="2.200" fill="none" stroke-linejoin="round" stroke-linecap="round"/>
<path d="M807.0 586.3 C808.7 591.6 814.5 606.3 816.5 616.0 C818.5 625.7 816.3 634.3 818.0 640.0 C819.7 645.7 820.0 644.4 825.8 647.6 C831.6 650.8 845.6 656.1 850.0 658.0" stroke="#ffffff" stroke-width="2.200" fill="none" stroke-linejoin="round" stroke-linecap="round"/>
<path d="M779.3 604.9 C783.3 608.9 791.9 618.3 801.6 627.0 C811.3 635.7 827.3 648.3 833.0 653.0" stroke="#ffffff" stroke-width="2.200" fill="none" stroke-linejoin="round" stroke-linecap="round"/>
<path d="M838.8 627.0 C842.4 628.7 851.6 635.1 859.0 636.5 C866.4 637.9 868.1 635.4 880.0 634.6 C891.9 633.8 916.9 632.5 925.0 632.0" stroke="#ffffff" stroke-width="2.200" fill="none" stroke-linejoin="round" stroke-linecap="round"/>
<path d="M801.6 625.0 L814.6 614.0" stroke="#ffffff" stroke-width="2.200" fill="none" stroke-linejoin="round" stroke-linecap="round"/>
<path d="M888.0 633.0 C888.2 635.2 889.5 639.2 889.0 645.0 C888.5 650.8 890.8 660.1 885.0 665.0 C879.2 669.9 866.9 673.8 857.0 672.0 C847.1 670.2 834.9 658.1 830.0 655.0" stroke="#ffffff" stroke-width="2.200" fill="none" stroke-linejoin="round" stroke-linecap="round"/>
<path d="M793.0 707.0 C794.3 709.7 797.3 717.9 800.0 722.0 C802.7 726.1 806.6 728.6 808.0 730.0" stroke="#ffffff" stroke-width="2.200" fill="none" stroke-linejoin="round" stroke-linecap="round"/>
<path d="M1003.0 519.0 C1000.7 521.0 994.3 526.2 990.0 530.0 C985.7 533.8 983.7 533.9 979.0 540.0 C974.3 546.1 970.4 554.3 964.0 564.0 C957.6 573.7 947.3 588.4 943.6 593.7" stroke="#ffffff" stroke-width="2.200" fill="none" stroke-linejoin="round" stroke-linecap="round"/>
<path d="M1155.0 490.0 C1155.9 495.4 1158.7 512.6 1160.0 520.0 C1161.3 527.4 1159.8 524.2 1162.5 531.0 C1165.2 537.8 1171.3 549.6 1175.0 558.0 C1178.7 566.4 1179.4 569.7 1183.0 577.7 C1186.6 585.7 1192.8 598.2 1195.0 602.7" stroke="#ffffff" stroke-width="2.200" fill="none" stroke-linejoin="round" stroke-linecap="round"/>
<path d="M1240.0 512.7 C1242.7 517.8 1251.4 533.8 1255.0 541.0 C1258.6 548.2 1257.9 545.2 1260.0 552.7 C1262.1 560.2 1265.5 577.3 1266.7 582.7" stroke="#ffffff" stroke-width="2.200" fill="none" stroke-linejoin="round" stroke-linecap="round"/>
<path d="M1286.7 490.0 C1289.1 493.8 1296.2 504.2 1300.0 511.0 C1303.8 517.8 1304.9 523.2 1308.0 527.7 C1311.1 532.2 1315.4 534.5 1317.0 536.0" stroke="#ffffff" stroke-width="2.200" fill="none" stroke-linejoin="round" stroke-linecap="round"/>
<path d="M1317.0 526.0 C1306.7 530.5 1275.1 545.6 1260.0 551.0 C1244.9 556.4 1242.4 554.6 1233.0 556.0 C1223.6 557.4 1215.4 556.0 1208.0 559.0 C1200.6 562.0 1196.4 569.5 1191.7 572.7 C1187.0 575.9 1183.5 576.1 1181.7 576.8" stroke="#ffffff" stroke-width="2.200" fill="none" stroke-linejoin="round" stroke-linecap="round"/>
<path d="M1317.0 567.7 C1310.9 570.4 1298.1 578.0 1283.0 582.7 C1267.9 587.4 1249.2 589.8 1233.0 594.0 C1216.8 598.2 1202.5 601.7 1193.0 606.0 C1183.5 610.3 1184.7 612.3 1180.0 617.7 C1175.3 623.1 1169.8 631.6 1166.7 636.0 C1163.6 640.4 1163.7 640.9 1163.0 642.0" stroke="#ffffff" stroke-width="2.200" fill="none" stroke-linejoin="round" stroke-linecap="round"/>
<path d="M1231.7 557.0 C1231.8 559.9 1233.2 566.6 1232.5 573.0 C1231.8 579.4 1228.8 589.2 1228.0 592.7" stroke="#ffffff" stroke-width="2.200" fill="none" stroke-linejoin="round" stroke-linecap="round"/>
<path d="M1105.0 706.0 C1107.7 703.1 1111.9 696.8 1120.0 690.0 C1128.1 683.2 1141.9 677.0 1150.0 668.0 C1158.1 659.0 1162.3 645.0 1165.0 640.0" stroke="#ffffff" stroke-width="2.200" fill="none" stroke-linejoin="round" stroke-linecap="round"/>
<path d="M946.0 789.0 C954.6 788.6 981.8 789.2 994.0 787.0 C1006.2 784.8 1007.7 780.1 1014.0 777.0 C1020.3 773.9 1024.0 771.0 1029.0 769.5 C1034.0 768.0 1037.0 767.9 1042.0 768.4 C1047.0 768.9 1054.3 771.4 1057.0 772.0" stroke="#ffffff" stroke-width="2.200" fill="none" stroke-linejoin="round" stroke-linecap="round"/>
<path d="M1018.0 782.0 C1019.3 787.9 1022.8 806.7 1025.0 815.0 C1027.2 823.3 1029.1 825.7 1030.0 828.0" stroke="#ffffff" stroke-width="2.200" fill="none" stroke-linejoin="round" stroke-linecap="round"/>
<path d="M925.0 849.0 C926.8 851.3 921.5 862.7 935.0 862.0 C948.5 861.3 988.3 848.1 1000.0 845.0" stroke="#ffffff" stroke-width="2.200" fill="none" stroke-linejoin="round" stroke-linecap="round"/>
<path d="M963.0 822.0 C964.6 825.2 959.9 838.6 972.0 840.0 C984.1 841.4 1016.0 831.8 1030.0 830.0 C1044.0 828.2 1046.4 830.0 1050.0 830.0" stroke="#ffffff" stroke-width="2.200" fill="none" stroke-linejoin="round" stroke-linecap="round"/>
<path d="M1048.0 816.0 C1048.4 818.5 1047.8 824.8 1050.0 830.0 C1052.2 835.2 1054.6 839.6 1060.0 845.0 C1065.4 850.4 1074.2 855.5 1080.0 860.0 C1085.8 864.5 1089.8 868.2 1092.0 870.0" stroke="#ffffff" stroke-width="2.200" fill="none" stroke-linejoin="round" stroke-linecap="round"/>
<path d="M1092.0 870.0 L1130.0 877.0" stroke="#ffffff" stroke-width="2.200" fill="none" stroke-linejoin="round" stroke-linecap="round"/>
<path d="M1133.0 877.0 C1133.5 874.7 1134.2 867.4 1136.0 864.0 C1137.8 860.6 1137.5 859.2 1143.0 858.0 C1148.5 856.8 1157.1 856.2 1166.5 857.5 C1175.9 858.8 1182.9 865.0 1195.0 865.0 C1207.1 865.0 1224.7 861.5 1233.7 857.5 C1242.7 853.5 1248.9 851.4 1245.0 843.0 C1241.1 834.6 1217.9 816.8 1212.0 811.0" stroke="#ffffff" stroke-width="2.200" fill="none" stroke-linejoin="round" stroke-linecap="round"/>
<path d="M898.0 800.0 C901.6 808.1 913.1 836.2 918.0 845.0 C922.9 853.8 923.7 848.3 925.0 849.0" stroke="#ffffff" stroke-width="2.200" fill="none" stroke-linejoin="round" stroke-linecap="round"/>
<path d="M600.0 775.0 C601.3 775.7 602.3 778.8 607.0 779.0 C611.7 779.2 622.2 772.2 626.0 776.0 C629.8 779.8 627.6 790.3 628.0 800.0 C628.4 809.7 623.1 823.2 628.0 830.0 C632.9 836.8 645.6 834.9 655.0 838.0 C664.4 841.1 675.5 845.4 680.0 847.0" stroke="#ffffff" stroke-width="2.200" fill="none" stroke-linejoin="round" stroke-linecap="round"/>
<path d="M607.0 779.0 L607.0 840.0" stroke="#ffffff" stroke-width="2.200" fill="none" stroke-linejoin="round" stroke-linecap="round"/>
<path d="M628.0 790.0 L620.0 776.0" stroke="#ffffff" stroke-width="2.200" fill="none" stroke-linejoin="round" stroke-linecap="round"/>
<path d="M669.0 853.0 L672.0 877.0" stroke="#ffffff" stroke-width="2.200" fill="none" stroke-linejoin="round" stroke-linecap="round"/>
<path d="M680.0 847.0 C681.8 848.6 686.4 853.3 690.0 856.0 C693.6 858.7 694.6 860.2 700.0 862.0 C705.4 863.8 713.7 864.9 720.0 866.0 C726.3 867.1 730.5 866.7 735.0 868.0 C739.5 869.3 743.2 872.1 745.0 873.0" stroke="#ffffff" stroke-width="2.200" fill="none" stroke-linejoin="round" stroke-linecap="round"/>
<path d="M700.0 877.0 L715.0 866.0" stroke="#ffffff" stroke-width="2.200" fill="none" stroke-linejoin="round" stroke-linecap="round"/>
<path d="M664.0 815.0 C665.4 817.7 669.1 824.2 672.0 830.0 C674.9 835.8 678.6 843.9 680.0 847.0" stroke="#ffffff" stroke-width="2.200" fill="none" stroke-linejoin="round" stroke-linecap="round"/>
<path d="M650.0 836.0 C652.5 835.6 660.0 835.1 664.0 834.0 C668.0 832.9 670.6 830.7 672.0 830.0" stroke="#ffffff" stroke-width="2.200" fill="none" stroke-linejoin="round" stroke-linecap="round"/>
<path d="M800.0 584.0 C797.6 584.4 793.5 585.7 786.8 586.3 C780.1 586.9 770.3 589.2 762.6 587.2 C754.9 585.2 752.7 577.5 744.0 575.0 C735.3 572.5 722.0 572.6 714.3 573.3 C706.6 574.0 705.3 573.9 701.3 578.9 C697.3 583.9 693.5 594.7 692.0 601.0 C690.5 607.3 691.3 610.1 693.0 614.0 C694.7 617.9 697.9 620.9 701.3 622.5 C704.7 624.1 710.1 622.9 712.0 623.0" stroke="#a3a9ad" stroke-width="2.500" fill="none"/>
<path d="M800.0 584.0 C797.6 584.4 793.5 585.7 786.8 586.3 C780.1 586.9 770.3 589.2 762.6 587.2 C754.9 585.2 752.7 577.5 744.0 575.0 C735.3 572.5 722.0 572.6 714.3 573.3 C706.6 574.0 705.3 573.9 701.3 578.9 C697.3 583.9 693.5 594.7 692.0 601.0 C690.5 607.3 691.3 610.1 693.0 614.0 C694.7 617.9 697.9 620.9 701.3 622.5 C704.7 624.1 710.1 622.9 712.0 623.0" stroke="#fbfaf7" stroke-width="1.300" fill="none" stroke-dasharray="20 22" stroke-dashoffset="30"/>
<path d="M788.6 590.0 C783.5 592.0 772.7 596.0 760.0 601.0 C747.3 606.0 728.8 613.1 718.0 618.0 C707.2 622.9 709.5 621.3 700.0 628.0 C690.5 634.7 674.0 647.1 665.0 655.0 C656.0 662.9 652.7 668.9 650.0 672.0" stroke="#a3a9ad" stroke-width="2.500" fill="none"/>
<path d="M788.6 590.0 C783.5 592.0 772.7 596.0 760.0 601.0 C747.3 606.0 728.8 613.1 718.0 618.0 C707.2 622.9 709.5 621.3 700.0 628.0 C690.5 634.7 674.0 647.1 665.0 655.0 C656.0 662.9 652.7 668.9 650.0 672.0" stroke="#fbfaf7" stroke-width="1.300" fill="none" stroke-dasharray="22 20" stroke-dashoffset="8"/>
<path d="M760.7 513.9 C763.3 516.3 770.0 522.3 775.0 527.0 C780.0 531.7 784.5 535.2 788.6 539.9 C792.7 544.6 795.9 547.9 797.9 552.9 C799.9 557.9 799.7 562.8 799.5 567.7 C799.3 572.6 797.5 577.8 797.0 580.0" stroke="#e3a6a0" stroke-width="2.600" fill="none"/>
<path d="M786.0 584.0 C782.5 588.1 772.9 598.7 766.3 606.8 C759.7 614.9 755.6 623.7 749.6 629.0 C743.6 634.3 740.9 633.2 732.9 636.5 C724.9 639.8 715.1 643.9 705.0 647.6 C694.9 651.3 685.1 653.2 677.0 657.0 C668.9 660.8 665.8 664.6 660.0 668.5 C654.2 672.4 651.8 673.4 645.0 678.5 C638.2 683.6 627.7 691.0 622.5 697.0 C617.3 703.0 618.1 706.1 616.0 712.0 C613.9 717.9 612.4 723.5 611.0 730.0 C609.6 736.5 610.3 742.2 608.0 748.0 C605.7 753.8 602.7 756.6 598.0 762.0 C593.3 767.4 586.5 772.1 582.0 778.0 C577.5 783.9 574.9 788.9 573.0 795.0 C571.1 801.1 571.8 808.9 571.5 812.0" stroke="#e3a6a0" stroke-width="2.600" fill="none"/>
<path d="M760.7 513.9 C763.3 516.3 770.0 522.3 775.0 527.0 C780.0 531.7 784.5 535.2 788.6 539.9 C792.7 544.6 795.9 547.9 797.9 552.9 C799.9 557.9 799.7 562.8 799.5 567.7 C799.3 572.6 797.5 577.8 797.0 580.0" stroke="#fdf6f2" stroke-width="1.300" fill="none" stroke-dasharray="11 9" stroke-dashoffset="4"/>
<path d="M786.0 584.0 C782.5 588.1 772.9 598.7 766.3 606.8 C759.7 614.9 755.6 623.7 749.6 629.0 C743.6 634.3 740.9 633.2 732.9 636.5 C724.9 639.8 715.1 643.9 705.0 647.6 C694.9 651.3 685.1 653.2 677.0 657.0 C668.9 660.8 663.1 666.4 660.0 668.5" stroke="#fdf6f2" stroke-width="1.300" fill="none" stroke-dasharray="13 10" stroke-dashoffset="6"/>
<path d="M660.0 668.5 C657.3 670.3 651.8 673.4 645.0 678.5 C638.2 683.6 627.7 691.0 622.5 697.0 C617.3 703.0 618.1 706.1 616.0 712.0 C613.9 717.9 612.4 723.5 611.0 730.0 C609.6 736.5 610.3 742.2 608.0 748.0 C605.7 753.8 602.7 756.6 598.0 762.0 C593.3 767.4 586.5 772.1 582.0 778.0 C577.5 783.9 574.9 788.9 573.0 795.0 C571.1 801.1 571.8 808.9 571.5 812.0" stroke="#f6e3de" stroke-width="1.600" fill="none"/>
<path d="M566 800 L566 817" stroke="#9da3a8" stroke-width="4"/>
<path d="M672.0 490.0 C677.0 494.2 689.6 504.3 700.0 513.5 C710.4 522.7 721.9 533.8 730.0 541.0 C738.1 548.2 739.6 549.0 745.0 553.5 C750.4 558.0 754.1 562.7 760.0 566.0 C765.9 569.3 770.3 568.9 777.5 572.0 C784.7 575.1 796.0 581.4 800.0 583.5" stroke="#e0a92f" stroke-width="6.9" fill="none" stroke-linejoin="round" stroke-linecap="round"/>
<path d="M800.0 583.5 C805.4 584.5 820.7 585.4 830.0 589.0 C839.3 592.6 847.8 600.9 851.7 603.5" stroke="#e0a92f" stroke-width="5.5" fill="none" stroke-linejoin="round" stroke-linecap="round"/>
<path d="M851.7 603.5 C864.5 603.0 902.1 602.2 923.0 601.0 C943.9 599.8 959.9 597.7 968.0 597.0" stroke="#e0a92f" stroke-width="5.1" fill="none" stroke-linejoin="round" stroke-linecap="round"/>
<path d="M968.0 597.0 C972.3 596.6 982.3 595.5 991.7 595.0 C1001.1 594.5 1007.2 594.7 1020.0 594.0 C1032.8 593.3 1051.9 592.8 1063.0 591.0 C1074.1 589.2 1076.1 587.1 1081.7 584.0 C1087.3 580.9 1084.8 580.9 1094.0 573.5 C1103.2 566.1 1122.9 550.0 1133.0 542.7 C1143.1 535.4 1144.8 534.9 1150.0 532.7 C1155.2 530.5 1147.3 533.4 1161.7 530.7 C1176.1 528.0 1214.7 522.1 1230.0 517.7 C1245.3 513.3 1240.8 510.3 1246.7 506.0 C1252.6 501.7 1257.9 497.1 1263.0 494.0 C1268.1 490.9 1272.8 489.9 1275.0 489.0" stroke="#eaa95b" stroke-width="4.9" fill="none" stroke-linejoin="round" stroke-linecap="round"/>
<path d="M731.0 543.0 C730.5 546.2 729.7 552.7 728.0 561.0 C726.3 569.3 723.8 580.9 721.7 589.0 C719.6 597.1 718.6 600.6 716.5 606.0 C714.4 611.4 713.3 615.0 710.0 619.0 C706.7 623.0 700.2 626.4 698.0 628.0" stroke="#e0a92f" stroke-width="6.1" fill="none" stroke-linejoin="round" stroke-linecap="round"/>
<path d="M698.0 628.0 C692.6 631.3 676.9 639.7 668.0 646.5 C659.1 653.3 654.8 658.5 648.5 666.0 C642.2 673.5 638.1 682.8 633.0 688.0 C627.9 693.2 623.7 691.6 620.0 695.0 C616.3 698.4 614.8 702.7 612.5 707.0 C610.2 711.3 608.7 713.4 607.0 719.0 C605.3 724.6 604.0 732.4 603.0 738.0 C602.0 743.6 604.5 745.4 601.4 750.0 C598.3 754.6 592.6 758.5 586.0 763.4 C579.4 768.3 571.9 773.5 565.0 777.0 C558.1 780.5 553.5 779.5 547.6 782.6 C541.7 785.7 534.8 791.9 532.0 794.0" stroke="#e0a92f" stroke-width="5.5" fill="none" stroke-linejoin="round" stroke-linecap="round"/>
<path d="M743.0 552.0 C741.7 552.0 738.2 550.6 736.0 552.0 C733.8 553.4 731.9 558.6 731.0 560.0" stroke="#e0a92f" stroke-width="4.3" fill="none" stroke-linejoin="round" stroke-linecap="round"/>
<path d="M565.0 777.0 C565.3 779.3 568.6 784.5 566.8 790.0 C565.0 795.5 557.1 804.4 555.0 807.6" stroke="#e0a92f" stroke-width="4.9" fill="none" stroke-linejoin="round" stroke-linecap="round"/>
<path d="M601.4 750.0 C602.9 750.7 601.8 751.7 610.0 754.0 C618.2 756.3 630.5 763.2 646.7 763.0 C662.9 762.8 684.5 756.1 700.0 752.7 C715.5 749.3 718.6 747.5 733.0 744.0 C747.4 740.5 764.9 735.7 780.0 733.0 C795.1 730.3 802.7 730.3 816.7 729.0 C830.7 727.7 843.0 728.3 858.0 726.0 C873.0 723.7 887.0 720.1 900.0 716.0 C913.0 711.9 924.6 705.3 930.0 703.0" stroke="#e0a92f" stroke-width="4.7" fill="none" stroke-linejoin="round" stroke-linecap="round"/>
<path d="M888.0 489.0 C890.2 491.0 895.1 496.0 900.0 500.0 C904.9 504.0 912.3 509.0 915.0 511.0" stroke="#efbf57" stroke-width="4.1" fill="none" stroke-linejoin="round" stroke-linecap="round"/>
<path d="M948.0 489.0 C945.8 491.0 940.5 496.0 936.0 500.0 C931.5 504.0 925.3 509.0 923.0 511.0" stroke="#efbf57" stroke-width="4.1" fill="none" stroke-linejoin="round" stroke-linecap="round"/>
<path d="M919.0 511.0 C919.5 518.5 920.9 536.5 921.7 552.7 C922.5 568.9 923.0 592.3 923.3 601.0" stroke="#efbf57" stroke-width="4.5" fill="none" stroke-linejoin="round" stroke-linecap="round"/>
<path d="M923.3 601.0 C923.6 608.4 924.5 629.8 925.0 642.0 C925.5 654.2 925.1 661.4 926.0 669.0 C926.9 676.6 928.1 677.3 930.0 684.0 C931.9 690.7 935.5 702.0 936.7 706.0" stroke="#eaa95b" stroke-width="4.7" fill="none" stroke-linejoin="round" stroke-linecap="round"/>
<path d="M937.5 708.0 C938.3 713.1 940.3 726.2 941.7 736.6 C943.1 747.0 944.2 758.2 945.5 766.0 C946.8 773.8 947.7 775.6 949.0 780.0 C950.3 784.4 950.3 783.7 952.9 790.5 C955.5 797.3 961.5 813.0 963.4 818.0" stroke="#efbf57" stroke-width="4.5" fill="none" stroke-linejoin="round" stroke-linecap="round"/>
<path d="M1038.0 489.0 C1038.7 492.4 1038.6 501.6 1041.7 507.7 C1044.8 513.8 1050.5 517.6 1055.0 522.7 C1059.5 527.8 1063.7 531.2 1066.7 536.0 C1069.7 540.8 1070.6 540.3 1071.7 549.3 C1072.8 558.3 1073.0 575.3 1073.0 586.0 C1073.0 596.7 1073.1 601.3 1071.7 609.0 C1070.3 616.7 1066.4 623.1 1065.0 629.0 C1063.6 634.9 1063.7 638.4 1064.0 642.0 C1064.3 645.6 1064.2 645.3 1066.7 649.0 C1069.2 652.7 1074.7 657.8 1078.0 662.7 C1081.3 667.6 1083.3 670.9 1085.0 676.0 C1086.7 681.1 1087.9 686.2 1087.5 691.0 C1087.1 695.8 1085.1 699.6 1083.0 702.7 C1080.9 705.8 1077.3 707.0 1076.0 708.0" stroke="#eaa95b" stroke-width="5.1" fill="none" stroke-linejoin="round" stroke-linecap="round"/>
<path d="M931.0 694.0 C932.6 693.1 935.1 690.1 940.0 689.0 C944.9 687.9 949.6 687.9 958.0 687.7 C966.4 687.5 979.1 687.3 986.7 687.7 C994.3 688.1 994.6 688.0 1000.0 690.0 C1005.4 692.0 1009.2 695.9 1016.7 699.0 C1024.2 702.1 1032.7 705.3 1041.7 707.0 C1050.7 708.7 1058.9 708.4 1066.7 708.5 C1074.5 708.6 1081.7 707.8 1085.0 707.7" stroke="#eaa95b" stroke-width="6.1" fill="none" stroke-linejoin="round" stroke-linecap="round"/>
<path d="M1085.0 707.7 C1088.2 707.7 1098.0 706.8 1103.0 707.7 C1108.0 708.6 1107.6 708.2 1113.0 712.7 C1118.4 717.2 1124.5 724.9 1133.0 732.7 C1141.5 740.5 1152.1 748.6 1160.0 756.0 C1167.9 763.4 1170.4 767.5 1176.7 774.0 C1183.0 780.5 1188.6 785.4 1195.0 792.0 C1201.4 798.6 1208.9 807.3 1212.0 810.7" stroke="#efbf57" stroke-width="4.7" fill="none" stroke-linejoin="round" stroke-linecap="round"/>
<path d="M1081.7 710.0 C1080.1 714.7 1076.2 727.5 1073.0 736.0 C1069.8 744.5 1066.8 748.9 1064.0 757.5 C1061.2 766.1 1059.7 773.6 1057.5 783.8 C1055.3 794.0 1053.0 808.9 1052.0 814.4" stroke="#efbf57" stroke-width="4.1" fill="none" stroke-linejoin="round" stroke-linecap="round"/>
<path d="M1140.0 810.7 C1143.2 807.0 1151.4 796.4 1158.0 790.0 C1164.6 783.6 1173.3 777.7 1176.7 775.0" stroke="#efbf57" stroke-width="3.9" fill="none" stroke-linejoin="round" stroke-linecap="round"/>
<path d="M963.4 821.0 C965.5 819.4 970.7 814.3 975.0 812.0 C979.3 809.7 978.9 807.6 987.5 808.0 C996.1 808.4 1011.2 812.5 1023.0 814.0 C1034.8 815.5 1041.5 815.7 1053.0 816.6 C1064.5 817.5 1071.3 819.9 1087.0 818.8 C1102.7 817.7 1130.5 812.2 1140.0 810.7" stroke="#efbf57" stroke-width="4.5" fill="none" stroke-linejoin="round" stroke-linecap="round"/>
<path d="M1212.0 810.7 C1224.1 803.3 1260.1 781.0 1279.0 769.5 C1297.9 758.0 1310.2 751.0 1317.0 747.0" stroke="#efbf57" stroke-width="4.5" fill="none" stroke-linejoin="round" stroke-linecap="round"/>
<path d="M672.0 490.0 C677.0 494.2 689.6 504.3 700.0 513.5 C710.4 522.7 721.9 533.8 730.0 541.0 C738.1 548.2 739.6 549.0 745.0 553.5 C750.4 558.0 754.1 562.7 760.0 566.0 C765.9 569.3 770.3 568.9 777.5 572.0 C784.7 575.1 796.0 581.4 800.0 583.5" stroke="#f3c64e" stroke-width="5.6" fill="none" stroke-linejoin="round" stroke-linecap="round"/>
<path d="M800.0 583.5 C805.4 584.5 820.7 585.4 830.0 589.0 C839.3 592.6 847.8 600.9 851.7 603.5" stroke="#f3c64e" stroke-width="4.2" fill="none" stroke-linejoin="round" stroke-linecap="round"/>
<path d="M851.7 603.5 C864.5 603.0 902.1 602.2 923.0 601.0 C943.9 599.8 959.9 597.7 968.0 597.0" stroke="#f3c64e" stroke-width="3.8" fill="none" stroke-linejoin="round" stroke-linecap="round"/>
<path d="M968.0 597.0 C972.3 596.6 982.3 595.5 991.7 595.0 C1001.1 594.5 1007.2 594.7 1020.0 594.0 C1032.8 593.3 1051.9 592.8 1063.0 591.0 C1074.1 589.2 1076.1 587.1 1081.7 584.0 C1087.3 580.9 1084.8 580.9 1094.0 573.5 C1103.2 566.1 1122.9 550.0 1133.0 542.7 C1143.1 535.4 1144.8 534.9 1150.0 532.7 C1155.2 530.5 1147.3 533.4 1161.7 530.7 C1176.1 528.0 1214.7 522.1 1230.0 517.7 C1245.3 513.3 1240.8 510.3 1246.7 506.0 C1252.6 501.7 1257.9 497.1 1263.0 494.0 C1268.1 490.9 1272.8 489.9 1275.0 489.0" stroke="#f7c987" stroke-width="3.6" fill="none" stroke-linejoin="round" stroke-linecap="round"/>
<path d="M731.0 543.0 C730.5 546.2 729.7 552.7 728.0 561.0 C726.3 569.3 723.8 580.9 721.7 589.0 C719.6 597.1 718.6 600.6 716.5 606.0 C714.4 611.4 713.3 615.0 710.0 619.0 C706.7 623.0 700.2 626.4 698.0 628.0" stroke="#f3c64e" stroke-width="4.8" fill="none" stroke-linejoin="round" stroke-linecap="round"/>
<path d="M698.0 628.0 C692.6 631.3 676.9 639.7 668.0 646.5 C659.1 653.3 654.8 658.5 648.5 666.0 C642.2 673.5 638.1 682.8 633.0 688.0 C627.9 693.2 623.7 691.6 620.0 695.0 C616.3 698.4 614.8 702.7 612.5 707.0 C610.2 711.3 608.7 713.4 607.0 719.0 C605.3 724.6 604.0 732.4 603.0 738.0 C602.0 743.6 604.5 745.4 601.4 750.0 C598.3 754.6 592.6 758.5 586.0 763.4 C579.4 768.3 571.9 773.5 565.0 777.0 C558.1 780.5 553.5 779.5 547.6 782.6 C541.7 785.7 534.8 791.9 532.0 794.0" stroke="#f3c64e" stroke-width="4.2" fill="none" stroke-linejoin="round" stroke-linecap="round"/>
<path d="M743.0 552.0 C741.7 552.0 738.2 550.6 736.0 552.0 C733.8 553.4 731.9 558.6 731.0 560.0" stroke="#f3c64e" stroke-width="3.0" fill="none" stroke-linejoin="round" stroke-linecap="round"/>
<path d="M565.0 777.0 C565.3 779.3 568.6 784.5 566.8 790.0 C565.0 795.5 557.1 804.4 555.0 807.6" stroke="#f3c64e" stroke-width="3.6" fill="none" stroke-linejoin="round" stroke-linecap="round"/>
<path d="M601.4 750.0 C602.9 750.7 601.8 751.7 610.0 754.0 C618.2 756.3 630.5 763.2 646.7 763.0 C662.9 762.8 684.5 756.1 700.0 752.7 C715.5 749.3 718.6 747.5 733.0 744.0 C747.4 740.5 764.9 735.7 780.0 733.0 C795.1 730.3 802.7 730.3 816.7 729.0 C830.7 727.7 843.0 728.3 858.0 726.0 C873.0 723.7 887.0 720.1 900.0 716.0 C913.0 711.9 924.6 705.3 930.0 703.0" stroke="#f3c64e" stroke-width="3.4" fill="none" stroke-linejoin="round" stroke-linecap="round"/>
<path d="M888.0 489.0 C890.2 491.0 895.1 496.0 900.0 500.0 C904.9 504.0 912.3 509.0 915.0 511.0" stroke="#fbe08d" stroke-width="2.8" fill="none" stroke-linejoin="round" stroke-linecap="round"/>
<path d="M948.0 489.0 C945.8 491.0 940.5 496.0 936.0 500.0 C931.5 504.0 925.3 509.0 923.0 511.0" stroke="#fbe08d" stroke-width="2.8" fill="none" stroke-linejoin="round" stroke-linecap="round"/>
<path d="M919.0 511.0 C919.5 518.5 920.9 536.5 921.7 552.7 C922.5 568.9 923.0 592.3 923.3 601.0" stroke="#fbe08d" stroke-width="3.2" fill="none" stroke-linejoin="round" stroke-linecap="round"/>
<path d="M923.3 601.0 C923.6 608.4 924.5 629.8 925.0 642.0 C925.5 654.2 925.1 661.4 926.0 669.0 C926.9 676.6 928.1 677.3 930.0 684.0 C931.9 690.7 935.5 702.0 936.7 706.0" stroke="#f7c987" stroke-width="3.4" fill="none" stroke-linejoin="round" stroke-linecap="round"/>
<path d="M937.5 708.0 C938.3 713.1 940.3 726.2 941.7 736.6 C943.1 747.0 944.2 758.2 945.5 766.0 C946.8 773.8 947.7 775.6 949.0 780.0 C950.3 784.4 950.3 783.7 952.9 790.5 C955.5 797.3 961.5 813.0 963.4 818.0" stroke="#fbe08d" stroke-width="3.2" fill="none" stroke-linejoin="round" stroke-linecap="round"/>
<path d="M1038.0 489.0 C1038.7 492.4 1038.6 501.6 1041.7 507.7 C1044.8 513.8 1050.5 517.6 1055.0 522.7 C1059.5 527.8 1063.7 531.2 1066.7 536.0 C1069.7 540.8 1070.6 540.3 1071.7 549.3 C1072.8 558.3 1073.0 575.3 1073.0 586.0 C1073.0 596.7 1073.1 601.3 1071.7 609.0 C1070.3 616.7 1066.4 623.1 1065.0 629.0 C1063.6 634.9 1063.7 638.4 1064.0 642.0 C1064.3 645.6 1064.2 645.3 1066.7 649.0 C1069.2 652.7 1074.7 657.8 1078.0 662.7 C1081.3 667.6 1083.3 670.9 1085.0 676.0 C1086.7 681.1 1087.9 686.2 1087.5 691.0 C1087.1 695.8 1085.1 699.6 1083.0 702.7 C1080.9 705.8 1077.3 707.0 1076.0 708.0" stroke="#f7c987" stroke-width="3.8" fill="none" stroke-linejoin="round" stroke-linecap="round"/>
<path d="M931.0 694.0 C932.6 693.1 935.1 690.1 940.0 689.0 C944.9 687.9 949.6 687.9 958.0 687.7 C966.4 687.5 979.1 687.3 986.7 687.7 C994.3 688.1 994.6 688.0 1000.0 690.0 C1005.4 692.0 1009.2 695.9 1016.7 699.0 C1024.2 702.1 1032.7 705.3 1041.7 707.0 C1050.7 708.7 1058.9 708.4 1066.7 708.5 C1074.5 708.6 1081.7 707.8 1085.0 707.7" stroke="#f7c987" stroke-width="4.8" fill="none" stroke-linejoin="round" stroke-linecap="round"/>
<path d="M1085.0 707.7 C1088.2 707.7 1098.0 706.8 1103.0 707.7 C1108.0 708.6 1107.6 708.2 1113.0 712.7 C1118.4 717.2 1124.5 724.9 1133.0 732.7 C1141.5 740.5 1152.1 748.6 1160.0 756.0 C1167.9 763.4 1170.4 767.5 1176.7 774.0 C1183.0 780.5 1188.6 785.4 1195.0 792.0 C1201.4 798.6 1208.9 807.3 1212.0 810.7" stroke="#fbe08d" stroke-width="3.4" fill="none" stroke-linejoin="round" stroke-linecap="round"/>
<path d="M1081.7 710.0 C1080.1 714.7 1076.2 727.5 1073.0 736.0 C1069.8 744.5 1066.8 748.9 1064.0 757.5 C1061.2 766.1 1059.7 773.6 1057.5 783.8 C1055.3 794.0 1053.0 808.9 1052.0 814.4" stroke="#fbe08d" stroke-width="2.8" fill="none" stroke-linejoin="round" stroke-linecap="round"/>
<path d="M1140.0 810.7 C1143.2 807.0 1151.4 796.4 1158.0 790.0 C1164.6 783.6 1173.3 777.7 1176.7 775.0" stroke="#fbe08d" stroke-width="2.6" fill="none" stroke-linejoin="round" stroke-linecap="round"/>
<path d="M963.4 821.0 C965.5 819.4 970.7 814.3 975.0 812.0 C979.3 809.7 978.9 807.6 987.5 808.0 C996.1 808.4 1011.2 812.5 1023.0 814.0 C1034.8 815.5 1041.5 815.7 1053.0 816.6 C1064.5 817.5 1071.3 819.9 1087.0 818.8 C1102.7 817.7 1130.5 812.2 1140.0 810.7" stroke="#fbe08d" stroke-width="3.2" fill="none" stroke-linejoin="round" stroke-linecap="round"/>
<path d="M1212.0 810.7 C1224.1 803.3 1260.1 781.0 1279.0 769.5 C1297.9 758.0 1310.2 751.0 1317.0 747.0" stroke="#fbe08d" stroke-width="3.2" fill="none" stroke-linejoin="round" stroke-linecap="round"/>
<path d="M672.0 490.0 C677.0 494.2 689.6 504.3 700.0 513.5 C710.4 522.7 721.9 533.8 730.0 541.0 C738.1 548.2 739.6 549.0 745.0 553.5 C750.4 558.0 754.1 562.7 760.0 566.0 C765.9 569.3 770.3 568.9 777.5 572.0 C784.7 575.1 796.0 581.4 800.0 583.5" stroke="#dfae2e" stroke-width=".700" fill="none"/>
<path d="M731.0 543.0 C730.5 546.2 729.7 552.7 728.0 561.0 C726.3 569.3 723.8 580.9 721.7 589.0 C719.6 597.1 718.6 600.6 716.5 606.0 C714.4 611.4 713.3 615.0 710.0 619.0 C706.7 623.0 700.2 626.4 698.0 628.0" stroke="#dfae2e" stroke-width=".700" fill="none"/>
<path d="M698.0 628.0 C692.6 631.3 676.9 639.7 668.0 646.5 C659.1 653.3 654.8 658.5 648.5 666.0 C642.2 673.5 638.1 682.8 633.0 688.0 C627.9 693.2 623.7 691.6 620.0 695.0 C616.3 698.4 614.8 702.7 612.5 707.0 C610.2 711.3 608.7 713.4 607.0 719.0 C605.3 724.6 604.0 732.4 603.0 738.0 C602.0 743.6 604.5 745.4 601.4 750.0 C598.3 754.6 592.6 758.5 586.0 763.4 C579.4 768.3 571.9 773.5 565.0 777.0 C558.1 780.5 553.5 779.5 547.6 782.6 C541.7 785.7 534.8 791.9 532.0 794.0" stroke="#dfae2e" stroke-width=".700" fill="none"/>
<path d="M532.0 794.0 C530.0 796.4 525.6 802.4 520.7 807.6 C515.8 812.8 510.9 816.1 505.0 823.0 C499.1 829.9 492.9 836.3 488.0 846.0 C483.1 855.7 479.8 871.4 478.0 877.0" stroke="#edb738" stroke-width="4.200" fill="none" stroke-dasharray="4 2.500"/>
<path d="M532.0 794.0 C530.0 796.4 525.6 802.4 520.7 807.6 C515.8 812.8 510.9 816.1 505.0 823.0 C499.1 829.9 492.9 836.3 488.0 846.0 C483.1 855.7 479.8 871.4 478.0 877.0" stroke="#fbe9b0" stroke-width="1.600" fill="none"/>
<path d="M555.0 807.6 C552.3 811.7 545.5 823.7 540.0 830.6 C534.5 837.5 532.1 840.2 524.5 846.0 C516.9 851.8 507.3 857.4 497.6 863.0 C487.9 868.6 475.5 874.5 470.7 877.0" stroke="#edb738" stroke-width="4.200" fill="none" stroke-dasharray="4 2.500"/>
<path d="M555.0 807.6 C552.3 811.7 545.5 823.7 540.0 830.6 C534.5 837.5 532.1 840.2 524.5 846.0 C516.9 851.8 507.3 857.4 497.6 863.0 C487.9 868.6 475.5 874.5 470.7 877.0" stroke="#fbe9b0" stroke-width="1.600" fill="none"/>
<path d="M931 701 L943.500 701 L944.500 709 L940 713 L934 713 L930 708Z" fill="#f7c987" stroke="#eaa95b" stroke-width=".6"/>
<rect x="1064" y="584" width="18" height="16" rx="2" fill="#f7c987"/>
<path d="M800.0 583.5 C805.4 584.5 820.7 585.4 830.0 589.0 C839.3 592.6 835.0 601.3 851.7 603.5 C868.4 605.7 897.8 602.5 923.0 601.0 C948.2 599.5 974.2 596.3 991.7 595.0 C1009.2 593.7 1007.2 594.7 1020.0 594.0 C1032.8 593.3 1051.9 592.8 1063.0 591.0 C1074.1 589.2 1076.1 587.1 1081.7 584.0 C1087.3 580.9 1084.8 580.9 1094.0 573.5 C1103.2 566.1 1122.9 550.0 1133.0 542.7 C1143.1 535.4 1144.8 534.9 1150.0 532.7 C1155.2 530.5 1147.3 533.4 1161.7 530.7 C1176.1 528.0 1214.7 522.1 1230.0 517.7 C1245.3 513.3 1240.8 510.3 1246.7 506.0 C1252.6 501.7 1257.9 497.1 1263.0 494.0 C1268.1 490.9 1272.8 489.9 1275.0 489.0" stroke="#6f7d86" stroke-width="1.8" fill="none" stroke-dasharray="5 4"/>
<path d="M931.0 489.0 C929.2 493.0 922.7 499.5 921.0 511.0 C919.3 522.5 921.3 536.5 921.7 552.7 C922.1 568.9 922.7 584.9 923.3 601.0 C923.9 617.1 924.5 629.8 925.0 642.0 C925.5 654.2 925.1 661.4 926.0 669.0 C926.9 676.6 928.1 677.3 930.0 684.0 C931.9 690.7 934.9 697.9 936.7 706.0 C938.5 714.1 938.9 719.1 940.0 729.0 C941.1 738.9 941.9 751.8 943.0 761.0 C944.1 770.2 944.7 774.3 946.0 780.0 C947.3 785.7 946.9 785.7 950.0 792.5 C953.1 799.3 961.0 813.4 963.4 818.0" stroke="#6f7d86" stroke-width="1.8" fill="none" stroke-dasharray="5 4"/>
<path d="M851.0 490.0 C851.1 496.1 851.4 503.7 851.7 524.0 C852.0 544.3 855.0 584.7 852.5 602.7 C850.0 620.7 841.5 616.9 838.0 624.0 C834.5 631.1 834.8 636.8 833.0 642.0 C831.2 647.2 832.5 644.8 828.0 652.7 C823.5 660.6 814.3 676.1 808.0 686.0 C801.7 695.9 798.6 699.6 793.0 707.7 C787.4 715.8 779.6 726.8 776.7 731.0" stroke="#e0e0e0" stroke-width="2.600" fill="none"/>
<path d="M851.0 490.0 C851.1 496.1 851.4 503.7 851.7 524.0 C852.0 544.3 855.0 584.7 852.5 602.7 C850.0 620.7 841.5 616.9 838.0 624.0 C834.5 631.1 834.8 636.8 833.0 642.0 C831.2 647.2 832.5 644.8 828.0 652.7 C823.5 660.6 814.3 676.1 808.0 686.0 C801.7 695.9 798.6 699.6 793.0 707.7 C787.4 715.8 779.6 726.8 776.7 731.0" stroke="#6f7d86" stroke-width="2.2" fill="none" stroke-dasharray="4.500 4"/>
<path d="M776.7 731.0 C768.8 733.3 746.8 740.1 733.0 744.0 C719.2 747.9 715.5 749.3 700.0 752.7 C684.5 756.1 656.3 761.1 646.7 763.0" stroke="#6f7d86" stroke-width="1.8" fill="none" stroke-dasharray="5 4"/>
<path d="M643.7 763.0 L625.0 764.5 L603.3 767.6 L583.2 779.6 L583.2 826.8" stroke="#ececea" stroke-width="2.800" fill="none" stroke-linejoin="round"/>
<path d="M643.7 763.0 L625.0 764.5 L603.3 767.6 L583.2 779.6 L583.2 826.8" stroke="#6f7d86" stroke-width="2.000" fill="none" stroke-dasharray="4.500 4" stroke-linejoin="round"/>
<path d="M583.0 826.8 C581.6 828.8 581.0 835.3 575.0 838.0 C569.0 840.7 559.3 840.2 549.5 842.0 C539.7 843.8 528.4 844.9 520.7 848.0 C513.1 851.1 511.0 855.5 507.0 859.5 C503.0 863.5 500.1 868.1 498.6 870.0" stroke="#6f7d86" stroke-width="1.8" fill="none" stroke-dasharray="4.500 4"/>
<path d="M803.0 584.0 C800.1 585.8 791.2 590.0 786.7 594.0 C782.2 598.0 781.0 597.9 778.0 606.0 C775.0 614.1 774.1 629.7 770.0 639.0 C765.9 648.3 761.7 650.7 755.0 657.7 C748.3 664.7 738.4 673.4 733.0 677.7 C727.6 682.0 730.9 681.2 725.0 681.8 C719.1 682.4 706.5 681.4 700.0 681.0 C693.5 680.6 690.8 680.0 688.8 679.8" stroke="#6f7d86" stroke-width="1.8" fill="none" stroke-dasharray="4.500 4"/>
<path d="M688.8 679.8 C685.8 685.4 676.6 703.8 672.5 711.0 C668.4 718.2 667.4 714.8 666.0 720.0 C664.6 725.2 665.6 734.8 664.6 740.0 C663.6 745.2 660.8 745.0 660.5 749.0 C660.2 753.0 662.3 757.0 663.0 762.4 C663.7 767.8 665.4 770.3 664.6 778.9 C663.8 787.5 661.3 800.3 658.6 810.0 C655.9 819.7 651.2 826.5 649.7 832.7 C648.2 838.9 647.7 841.2 650.4 844.6 C653.1 848.0 661.3 849.9 664.6 851.4 C667.9 852.9 668.2 852.7 669.0 853.0" stroke="#6f7d86" stroke-width="1.8" fill="none" stroke-dasharray="4.500 4"/>
<path d="M543.7 734.6 C538.9 737.4 528.6 742.7 516.8 750.0 C505.0 757.3 491.5 767.8 478.4 775.0 C465.3 782.2 458.5 781.9 443.8 790.0 C429.1 798.1 416.8 806.0 397.0 820.0 C377.2 834.0 347.2 857.7 333.7 868.0 C320.2 878.3 323.9 875.4 321.8 877.0" stroke="#6f8ea8" stroke-width="1" fill="none" stroke-dasharray="5 3.500"/>
<path d="M547.0 737.0 C539.8 741.4 519.3 753.0 507.0 761.5 C494.7 770.0 489.8 775.7 478.4 784.5 C467.0 793.3 453.1 803.7 443.8 810.5 C434.5 817.3 442.3 811.2 427.0 822.5 C411.7 833.8 372.0 863.2 358.7 873.0 C345.4 882.8 354.0 876.3 353.0 877.0" stroke="#6f8ea8" stroke-width="1" fill="none" stroke-dasharray="5 3.500"/>
<path d="M546.0 736.0 C548.5 736.4 555.3 736.2 560.0 738.0 C564.7 739.8 568.0 742.9 572.0 746.0 C576.0 749.1 580.2 753.4 582.0 755.0" stroke="#6f8ea8" stroke-width="1" fill="none" stroke-dasharray="5 3.500"/>
<path d="M688.8 679.8 C690.8 680.5 696.2 682.3 700.0 684.0 C703.8 685.7 701.0 687.6 710.0 689.0 C719.0 690.4 740.1 691.5 750.0 692.0 C759.9 692.5 756.0 693.1 765.0 692.0 C774.0 690.9 792.3 685.8 800.0 686.0 C807.7 686.2 800.3 687.3 808.0 693.0 C815.7 698.7 830.6 706.4 843.0 717.7 C855.4 729.0 868.6 746.8 876.7 756.0 C884.8 765.2 884.9 763.4 888.0 769.0 C891.1 774.6 892.2 782.3 894.0 787.0 C895.8 791.7 893.9 787.3 898.0 795.0 C902.1 802.7 912.9 823.2 916.7 830.0 C920.5 836.8 916.9 831.7 919.0 833.0 C921.1 834.3 924.7 836.6 928.4 837.0 C932.1 837.4 933.1 837.9 939.4 835.0 C945.7 832.1 954.7 825.9 963.4 821.0 C972.1 816.1 976.8 809.3 987.5 808.0 C998.2 806.7 1011.2 812.5 1023.0 814.0 C1034.8 815.5 1041.5 815.7 1053.0 816.6 C1064.5 817.5 1071.3 819.9 1087.0 818.8 C1102.7 817.7 1128.7 812.3 1140.0 810.7 C1151.3 809.1 1140.5 808.9 1150.0 810.0 C1159.5 811.1 1181.8 816.5 1193.0 816.6 C1204.2 816.7 1196.5 819.2 1212.0 810.7 C1227.5 802.2 1260.1 781.0 1279.0 769.5 C1297.9 758.0 1310.2 751.0 1317.0 747.0" stroke="#e0626c" stroke-width="1.800" fill="none" stroke-linejoin="round"/>
<path d="M1038.0 492.7 C1035.1 494.7 1028.0 499.6 1021.7 504.0 C1015.4 508.4 1008.2 513.6 1003.0 517.0 C997.8 520.4 997.0 519.1 993.0 522.7 C989.0 526.3 983.3 533.7 981.0 537.0 C978.7 540.3 977.9 537.0 980.0 541.0 C982.1 545.0 990.2 549.3 992.5 559.0 C994.8 568.7 992.5 581.1 992.5 595.0 C992.5 608.9 992.6 626.5 992.5 636.0 C992.4 645.5 991.8 638.7 991.7 647.7 C991.6 656.7 991.3 676.9 991.7 686.0 C992.1 695.1 990.9 685.2 994.0 698.0 C997.1 710.8 1005.0 742.0 1009.0 757.0 C1013.0 772.0 1015.4 776.2 1016.5 781.6 C1017.6 787.0 1020.2 782.7 1015.0 787.0 C1009.8 791.3 996.8 799.5 987.5 805.6 C978.2 811.7 974.6 813.1 963.4 821.0 C952.1 828.9 934.8 841.5 925.0 849.4 C915.2 857.3 914.2 859.7 908.8 864.7 C903.4 869.7 897.5 874.8 895.0 877.0" stroke="#2fa5c6" stroke-width="1.700" fill="none" stroke-linejoin="round"/>
<path d="M583.0 827.8 C587.7 827.6 598.7 825.9 609.0 826.8 C619.3 827.7 632.6 831.2 640.0 833.0 C647.4 834.8 644.8 833.1 650.0 836.7 C655.2 840.3 663.6 848.8 669.0 853.0 C674.4 857.2 673.0 858.3 680.0 860.0 C687.0 861.7 696.0 863.0 708.0 862.5 C720.0 862.0 734.6 859.6 746.7 857.0 C758.8 854.4 768.1 849.7 775.0 848.0 C781.9 846.3 782.0 846.2 785.0 847.5 C788.0 848.8 789.5 851.5 791.7 855.0 C793.9 858.5 794.3 863.0 797.0 867.0 C799.7 871.0 805.0 875.2 806.7 877.0" stroke="#2fa5c6" stroke-width="1.700" fill="none" stroke-linejoin="round"/>
<circle cx="688.8" cy="679.8" r="3.200" fill="#fff" stroke="#6f7d86" stroke-width="1.500"/>
<circle cx="765.0" cy="692.0" r="3.200" fill="#fff" stroke="#6f7d86" stroke-width="1.500"/>
<circle cx="808.0" cy="693.0" r="3.200" fill="#fff" stroke="#6f7d86" stroke-width="1.500"/>
<circle cx="894.0" cy="787.0" r="3.200" fill="#fff" stroke="#6f7d86" stroke-width="1.500"/>
<circle cx="963.4" cy="821.0" r="3.200" fill="#fff" stroke="#6f7d86" stroke-width="1.500"/>
<circle cx="1023.0" cy="814.0" r="3.200" fill="#fff" stroke="#6f7d86" stroke-width="1.500"/>
<circle cx="1087.0" cy="818.8" r="3.200" fill="#fff" stroke="#6f7d86" stroke-width="1.500"/>
<circle cx="1140.0" cy="810.7" r="3.200" fill="#fff" stroke="#6f7d86" stroke-width="1.500"/>
<circle cx="1212.0" cy="810.7" r="3.200" fill="#fff" stroke="#6f7d86" stroke-width="1.500"/>
<circle cx="1279.0" cy="769.5" r="3.200" fill="#fff" stroke="#6f7d86" stroke-width="1.500"/>
<circle cx="1003.0" cy="517.0" r="3.200" fill="#fff" stroke="#6f7d86" stroke-width="1.500"/>
<circle cx="992.5" cy="595.0" r="3.200" fill="#fff" stroke="#6f7d86" stroke-width="1.500"/>
<circle cx="991.7" cy="647.7" r="3.200" fill="#fff" stroke="#6f7d86" stroke-width="1.500"/>
<circle cx="994.0" cy="698.0" r="3.200" fill="#fff" stroke="#6f7d86" stroke-width="1.500"/>
<circle cx="1009.0" cy="757.0" r="3.200" fill="#fff" stroke="#6f7d86" stroke-width="1.500"/>
<circle cx="925.0" cy="849.4" r="3.200" fill="#fff" stroke="#6f7d86" stroke-width="1.500"/>
<circle cx="669.0" cy="853.0" r="3.200" fill="#fff" stroke="#6f7d86" stroke-width="1.500"/>
<circle cx="746.7" cy="857.0" r="3.200" fill="#fff" stroke="#6f7d86" stroke-width="1.500"/>
<circle cx="797.0" cy="867.0" r="3.200" fill="#fff" stroke="#6f7d86" stroke-width="1.500"/>
<circle cx="498.6" cy="870.0" r="3.200" fill="#fff" stroke="#6f7d86" stroke-width="1.500"/>
<circle cx="923.3" cy="601.0" r="3.200" fill="#fff" stroke="#6f7d86" stroke-width="1.500"/>
<circle cx="1094.0" cy="573.5" r="3.200" fill="#fff" stroke="#6f7d86" stroke-width="1.500"/>
<circle cx="1161.7" cy="530.7" r="3.200" fill="#fff" stroke="#6f7d86" stroke-width="1.500"/>
<g opacity=".996">
<text x="718.9" y="499.4" textLength="64.5" lengthAdjust="spacing" font-size="12.1" font-weight="400" fill="#363636" style="paint-order:stroke;stroke:#fcf9f2;stroke-width:2.400px;stroke-linejoin:round;" >党史纪念馆</text>
<text x="882.2" y="523.9" textLength="70.9" lengthAdjust="spacing" font-size="12.1" font-weight="400" fill="#363636" style="paint-order:stroke;stroke:#fcf9f2;stroke-width:2.400px;stroke-linejoin:round;" >雁山立交桥</text>
<text x="1164.4" y="511.4" textLength="78.7" lengthAdjust="spacing" font-size="12.1" font-weight="400" fill="#363636" style="paint-order:stroke;stroke:#fcf9f2;stroke-width:2.400px;stroke-linejoin:round;" >医院青岛院区</text>
<text x="1164.4" y="495.4" textLength="78.7" lengthAdjust="spacing" font-size="12.1" font-weight="400" fill="#363636" style="paint-order:stroke;stroke:#fcf9f2;stroke-width:2.400px;stroke-linejoin:round;" >山东大学齐鲁</text>
<text x="763.1" y="581.8" textLength="90.5" lengthAdjust="spacing" font-size="12.1" font-weight="400" fill="#2b6cb8" style="paint-order:stroke;stroke:#fcf9f2;stroke-width:2.400px;stroke-linejoin:round;" >青岛长途汽车站</text>
<text x="1250.6" y="581.4" textLength="66.3" lengthAdjust="spacing" font-size="12.1" font-weight="400" fill="#363636" style="paint-order:stroke;stroke:#fcf9f2;stroke-width:2.400px;stroke-linejoin:round;" >鲁信长春花</text>
<text x="703.1" y="648.1" textLength="51.7" lengthAdjust="spacing" font-size="12.1" font-weight="400" fill="#363636" style="paint-order:stroke;stroke:#fcf9f2;stroke-width:2.400px;stroke-linejoin:round;" >普吉新区</text>
<text x="1016.9" y="655.2" textLength="65.4" lengthAdjust="spacing" font-size="12.1" font-weight="400" fill="#363636" style="paint-order:stroke;stroke:#fcf9f2;stroke-width:2.400px;stroke-linejoin:round;" >青岛外贸城</text>
<text x="1231.4" y="666.4" textLength="79.2" lengthAdjust="spacing" font-size="12.1" font-weight="400" fill="#2f8a2f" style="paint-order:stroke;stroke:#eaf6dc;stroke-width:2.400px;stroke-linejoin:round;" >浮山森林公园</text>
<text x="1133.9" y="677.6" textLength="65.0" lengthAdjust="spacing" font-size="12.1" font-weight="400" fill="#363636" style="paint-order:stroke;stroke:#fcf9f2;stroke-width:2.400px;stroke-linejoin:round;" >青岛国际动</text>
<text x="1126.4" y="693.6" textLength="78.9" lengthAdjust="spacing" font-size="12.1" font-weight="400" fill="#363636" style="paint-order:stroke;stroke:#fcf9f2;stroke-width:2.400px;stroke-linejoin:round;" >漫游戏产业园</text>
<text x="893.6" y="700.6" textLength="84.5" lengthAdjust="spacing" font-size="12.1" font-weight="400" fill="#363636" style="paint-order:stroke;stroke:#fcf9f2;stroke-width:2.400px;stroke-linejoin:round;" >澳柯玛立交桥</text>
<text x="1015.6" y="724.4" textLength="39.2" lengthAdjust="spacing" font-size="12.1" font-weight="400" fill="#363636" style="paint-order:stroke;stroke:#fcf9f2;stroke-width:2.400px;stroke-linejoin:round;" >大润发</text>
<text x="589.1" y="719.8" textLength="52.2" lengthAdjust="spacing" font-size="12.1" font-weight="400" fill="#363636" style="paint-order:stroke;stroke:#fcf9f2;stroke-width:2.400px;stroke-linejoin:round;" >山东省青</text>
<text x="575.3" y="734.4" textLength="66.0" lengthAdjust="spacing" font-size="12.1" font-weight="400" fill="#363636" style="paint-order:stroke;stroke:#fcf9f2;stroke-width:2.400px;stroke-linejoin:round;" >岛第四中学</text>
<text x="814.4" y="731.4" textLength="70.4" lengthAdjust="spacing" font-size="12.1" font-weight="400" fill="#363636" style="paint-order:stroke;stroke:#fcf9f2;stroke-width:2.400px;stroke-linejoin:round;" >海信立交桥</text>
<text x="1264.7" y="745.2" textLength="52.2" lengthAdjust="spacing" font-size="12.1" font-weight="400" fill="#363636" style="paint-order:stroke;stroke:#fcf9f2;stroke-width:2.400px;stroke-linejoin:round;" >颐山源墅</text>
<text x="627.6" y="792.6" textLength="78.3" lengthAdjust="spacing" font-size="12.1" font-weight="400" fill="#8a552d" style="paint-order:stroke;stroke:#fcf9f2;stroke-width:2.400px;stroke-linejoin:round;" >青岛天主教圣</text>
<text x="627.6" y="808.4" textLength="78.3" lengthAdjust="spacing" font-size="12.1" font-weight="400" fill="#8a552d" style="paint-order:stroke;stroke:#fcf9f2;stroke-width:2.400px;stroke-linejoin:round;" >弥额尔大教堂</text>
<text x="762.2" y="845.0" textLength="51.7" lengthAdjust="spacing" font-size="12.1" font-weight="400" fill="#2f8a2f" style="paint-order:stroke;stroke:#eaf6dc;stroke-width:2.400px;stroke-linejoin:round;" >中山公园</text>
<text x="838.1" y="840.8" textLength="65.0" lengthAdjust="spacing" font-size="12.1" font-weight="400" fill="#8a552d" style="paint-order:stroke;stroke:#fcf9f2;stroke-width:2.400px;stroke-linejoin:round;" >青岛湛山寺</text>
<text x="462.9" y="844.8" textLength="65.1" lengthAdjust="spacing" font-size="12.1" font-weight="400" fill="#363636" style="paint-order:stroke;stroke:#fcf9f2;stroke-width:2.400px;stroke-linejoin:round;" >青岛金茂湾</text>
<text x="550.3" y="842.0" textLength="38.6" lengthAdjust="spacing" font-size="12.1" font-weight="400" fill="#2b6cb8" style="paint-order:stroke;stroke:#fcf9f2;stroke-width:2.400px;stroke-linejoin:round;" >青岛站</text>
<text x="1048.8" y="882.2" textLength="91.3" lengthAdjust="spacing" font-size="12.1" font-weight="400" fill="#363636" style="paint-order:stroke;stroke:#fcf9f2;stroke-width:2.400px;stroke-linejoin:round;" >市立医院东院区</text>
<text x="338.8" y="850.7" textLength="35.8" lengthAdjust="spacing" font-size="12.4" font-weight="400" fill="#6b6b6b" style="" >1 公里</text>
<text x="842.4" y="493.6" font-size="12.1" font-weight="400" fill="#8a7d73" style="paint-order:stroke;stroke:#fcf9f2;stroke-width:2.400px;stroke-linejoin:round;" >人</text>
<text x="842.4" y="506.4" font-size="12.1" font-weight="400" fill="#8a7d73" style="paint-order:stroke;stroke:#fcf9f2;stroke-width:2.400px;stroke-linejoin:round;" >民</text>
<text x="842.4" y="520.3" font-size="12.1" font-weight="400" fill="#8a7d73" style="paint-order:stroke;stroke:#fcf9f2;stroke-width:2.400px;stroke-linejoin:round;" >路</text>
<text x="1065.2" y="559.4" font-size="12.1" font-weight="400" fill="#8a552d" style="paint-order:stroke;stroke:#fcf9f2;stroke-width:2.400px;stroke-linejoin:round;" >福</text>
<text x="1065.2" y="574.4" font-size="12.1" font-weight="400" fill="#8a552d" style="paint-order:stroke;stroke:#fcf9f2;stroke-width:2.400px;stroke-linejoin:round;" >州</text>
<text x="1065.2" y="589.4" font-size="12.1" font-weight="400" fill="#8a552d" style="paint-order:stroke;stroke:#fcf9f2;stroke-width:2.400px;stroke-linejoin:round;" >北</text>
<text x="1065.2" y="604.4" font-size="12.1" font-weight="400" fill="#8a552d" style="paint-order:stroke;stroke:#fcf9f2;stroke-width:2.400px;stroke-linejoin:round;" >路</text>
<text x="712.2" y="695.1" textLength="36.7" lengthAdjust="spacing" font-size="12.1" font-weight="400" fill="#e0626c" style="paint-order:stroke;stroke:#fcf9f2;stroke-width:2.400px;stroke-linejoin:round;" >2-号线</text>
<text x="1156.9" y="817.6" textLength="35.7" lengthAdjust="spacing" font-size="12.1" font-weight="400" fill="#e0626c" style="paint-order:stroke;stroke:#fcf9f2;stroke-width:2.400px;stroke-linejoin:round;" transform="rotate(8 1175 813)">2-号线</text>
<text x="615.6" y="834.6" textLength="35.0" lengthAdjust="spacing" font-size="12.1" font-weight="400" fill="#2fa5c6" style="paint-order:stroke;stroke:#fcf9f2;stroke-width:2.400px;stroke-linejoin:round;" transform="rotate(11 633 830)">3-号线</text>
<text x="937.4" y="852.0" textLength="57.2" lengthAdjust="spacing" font-size="13.2" font-weight="400" fill="#857b70" style="paint-order:stroke;stroke:#fcf9f2;stroke-width:2.400px;stroke-linejoin:round;" transform="rotate(-27 966.500 843)">东海西路</text>
<rect x="991" y="550" width="44" height="15.5" fill="#4fb6cc"/>
<text x="1013.0" y="562.1" text-anchor="middle" font-size="12.500" font-weight="700" fill="#fff">错埠岭</text>
<rect x="907" y="647" width="47" height="17" fill="#6aa9e8"/>
<text x="930.5" y="659.9" text-anchor="middle" font-size="12.500" font-weight="700" fill="#fff">市北区</text>
<rect x="1127" y="733" width="47" height="17" fill="#6aa9e8"/>
<text x="1150.5" y="745.9" text-anchor="middle" font-size="12.500" font-weight="700" fill="#fff">市南区</text>
</g>
<circle cx="751" cy="513" r="9" fill="#e8941f"/>
<g transform="translate(751 513)" fill="#fff" stroke="none"><path d="M-5.500 -1.800 L0 -5.600 L5.500 -1.800Z"/><rect x="-4.600" y="-1" width="1.700" height="4.400"/><rect x="-2" y="-1" width="1.600" height="4.400"/><rect x=".5" y="-1" width="1.600" height="4.400"/><rect x="3" y="-1" width="1.600" height="4.400"/><rect x="-5.500" y="3.700" width="11" height="1.300"/></g>
<circle cx="808" cy="560" r="9" fill="#3d8cf2"/>
<g transform="translate(808 560)" fill="#fff" stroke="none"><path d="M-6.200 -3.200 a1.600 1.600 0 0 1 1.600 -1.600 H4.600 a1.600 1.600 0 0 1 1.600 1.600 V2.600 a1 1 0 0 1 -1 1 H-5.200 a1 1 0 0 1 -1 -1Z"/><rect x="-5" y="-3.300" width="1.900" height="1.900" rx=".3" fill="#3d8cf2"/><rect x="-2.4" y="-3.300" width="1.900" height="1.900" rx=".3" fill="#3d8cf2"/><rect x="0.2" y="-3.300" width="1.900" height="1.900" rx=".3" fill="#3d8cf2"/><rect x="2.8" y="-3.300" width="1.900" height="1.900" rx=".3" fill="#3d8cf2"/><circle cx="-3.200" cy="3.400" r="1.700"/><circle cx="3.200" cy="3.400" r="1.700"/><circle cx="-3.200" cy="3.400" r=".8" fill="#3d8cf2"/><circle cx="3.200" cy="3.400" r=".8" fill="#3d8cf2"/></g>
<circle cx="1290" cy="559" r="9" fill="#2aaee8"/>
<g transform="translate(1290 559)" fill="#fff" stroke="none"><path d="M-5.600 -1.400 L-1.200 -5.400 L3.200 -1.400Z"/><rect x="-5" y="-.9" width="7.600" height="5.400"/><rect x="3.200" y=".6" width="2.600" height="3.900"/><rect x="-5.800" y="4.300" width="11.800" height="1"/><rect x="-3.6" y="-.2" width=".9" height="3.800" fill="#2aaee8"/><rect x="-1.4" y="-.2" width=".9" height="3.800" fill="#2aaee8"/><rect x="0.8" y="-.2" width=".9" height="3.800" fill="#2aaee8"/><rect x="4" y="1.500" width=".8" height="2.200" fill="#2aaee8"/></g>
<circle cx="690" cy="644" r="9" fill="#2aaee8"/>
<g transform="translate(690 644)" fill="#fff" stroke="none"><path d="M-5.600 -1.400 L-1.200 -5.400 L3.200 -1.400Z"/><rect x="-5" y="-.9" width="7.600" height="5.400"/><rect x="3.200" y=".6" width="2.600" height="3.900"/><rect x="-5.800" y="4.300" width="11.800" height="1"/><rect x="-3.6" y="-.2" width=".9" height="3.800" fill="#2aaee8"/><rect x="-1.4" y="-.2" width=".9" height="3.800" fill="#2aaee8"/><rect x="0.8" y="-.2" width=".9" height="3.800" fill="#2aaee8"/><rect x="4" y="1.500" width=".8" height="2.200" fill="#2aaee8"/></g>
<circle cx="1048" cy="632" r="9" fill="#a97be8"/>
<g transform="translate(1048 632)" fill="#fff" stroke="none"><path d="M-5 -1 H5 L4.200 4.600 H-4.200Z"/><path d="M-2.600 -1 V-2.600 A2.600 2.600 0 0 1 2.600 -2.600 V-1" fill="none" stroke="#fff" stroke-width="1.200"/><rect x="-5" y=".8" width="10" height=".9" fill="#a97be8"/></g>
<circle cx="1270" cy="643" r="9" fill="#46b04a"/>
<g transform="translate(1270 643)" fill="#fff" stroke="none"><path d="M0 -6.200 C2.600 -3.600 4.300 -.6 3.600 2 C3 3.700 -3 3.700 -3.600 2 C-4.300 -.6 -2.600 -3.600 0 -6.200Z"/><rect x="-.7" y="2.500" width="1.400" height="2.600"/><rect x="-3.200" y="4.800" width="6.400" height=".9"/><path d="M-1.200 -2.500 L-2 1.500" stroke="#46b04a" stroke-width=".6"/></g>
<circle cx="1165" cy="655" r="9" fill="#2aaee8"/>
<g transform="translate(1165 655)" fill="#fff" stroke="none"><rect x="-3" y="-5" width="1.400" height="9.500"/><rect x="-.8" y="-5" width="1.400" height="9.500"/><rect x="1.800" y="-2" width="1.400" height="6.500"/><rect x="-4.500" y="4" width="9" height="1"/></g>
<circle cx="1034" cy="702" r="9" fill="#a97be8"/>
<g transform="translate(1034 702)" fill="#fff" stroke="none"><path d="M-6 -4 H-4 L-3.400 -2.400 H5.200 L4 2 H-2.600Z"/><circle cx="-1.800" cy="4" r="1.100"/><circle cx="3" cy="4" r="1.100"/></g>
<circle cx="653" cy="723" r="9" fill="#3d9af2"/>
<text x="653" y="727.2" text-anchor="middle" font-size="11.500" font-weight="700" fill="#fff">文</text><g></g>
<circle cx="1290" cy="723" r="9" fill="#2aaee8"/>
<g transform="translate(1290 723)" fill="#fff" stroke="none"><path d="M-5.600 -1.400 L-1.200 -5.400 L3.200 -1.400Z"/><rect x="-5" y="-.9" width="7.600" height="5.400"/><rect x="3.200" y=".6" width="2.600" height="3.900"/><rect x="-5.800" y="4.300" width="11.800" height="1"/><rect x="-3.6" y="-.2" width=".9" height="3.800" fill="#2aaee8"/><rect x="-1.4" y="-.2" width=".9" height="3.800" fill="#2aaee8"/><rect x="0.8" y="-.2" width=".9" height="3.800" fill="#2aaee8"/><rect x="4" y="1.500" width=".8" height="2.200" fill="#2aaee8"/></g>
<circle cx="617" cy="796" r="9" fill="#b77a46"/>
<g transform="translate(617 796)" fill="#fff" stroke="none"><path d="M-4 5 V-.5 L0 -3.500 L4 -.5 V5Z"/><rect x="-.5" y="-6.500" width="1" height="3.500"/><rect x="-1.600" y="-5.500" width="3.200" height=".9"/><rect x="-1" y="2" width="2" height="3" fill="#b77a46"/></g>
<circle cx="788" cy="822" r="9" fill="#46b04a"/>
<g transform="translate(788 822)" fill="#fff" stroke="none"><path d="M0 -6.200 C2.600 -3.600 4.300 -.6 3.600 2 C3 3.700 -3 3.700 -3.600 2 C-4.300 -.6 -2.600 -3.600 0 -6.200Z"/><rect x="-.7" y="2.500" width="1.400" height="2.600"/><rect x="-3.200" y="4.800" width="6.400" height=".9"/><path d="M-1.200 -2.500 L-2 1.500" stroke="#46b04a" stroke-width=".6"/></g>
<circle cx="870" cy="818" r="9" fill="#c08a55"/>
<g transform="translate(870 818)" fill="#fff" stroke="none"><rect x="-4.500" y="-4" width="9" height="1.300"/><rect x="-3" y="-2.700" width="6" height="2"/><rect x="-4.800" y="-.7" width="9.600" height="1.300"/><rect x="-3" y=".6" width="6" height="2.400"/><rect x="-5" y="3" width="10" height="1.500"/><rect x="-.5" y="-5.800" width="1" height="1.800"/></g>
<circle cx="494" cy="822" r="9" fill="#2aaee8"/>
<g transform="translate(494 822)" fill="#fff" stroke="none"><path d="M-5.600 -1.400 L-1.200 -5.400 L3.200 -1.400Z"/><rect x="-5" y="-.9" width="7.600" height="5.400"/><rect x="3.200" y=".6" width="2.600" height="3.900"/><rect x="-5.800" y="4.300" width="11.800" height="1"/><rect x="-3.6" y="-.2" width=".9" height="3.800" fill="#2aaee8"/><rect x="-1.4" y="-.2" width=".9" height="3.800" fill="#2aaee8"/><rect x="0.8" y="-.2" width=".9" height="3.800" fill="#2aaee8"/><rect x="4" y="1.500" width=".8" height="2.200" fill="#2aaee8"/></g>
<circle cx="569" cy="820" r="9" fill="#3d84f0"/>
<g transform="translate(569 820)" fill="#fff" stroke="none"><circle cx="0" cy="-.6" r="4.600" fill="none" stroke="#fff" stroke-width="1.500"/><circle cx="0" cy="-.8" r="1.700"/><path d="M-4 5.200 L-1.600 2.400 H1.600 L4 5.200 H2 L.9 3.800 H-.9 L-2 5.200Z"/></g>
<circle cx="1094" cy="860" r="9" fill="#ec4c5a"/>
<g transform="translate(1094 860)" fill="#fff" stroke="none"><rect x="-1.300" y="-5" width="2.600" height="10"/><rect x="-5" y="-1.300" width="10" height="2.600"/></g>
<circle cx="910" cy="873.5" r="9" fill="#2aaee8"/>
<g transform="translate(910 873.5)" fill="#fff" stroke="none"><rect x="-3" y="-5" width="1.400" height="9.500"/><rect x="-.8" y="-5" width="1.400" height="9.500"/><rect x="1.800" y="-2" width="1.400" height="6.500"/><rect x="-4.500" y="4" width="9" height="1"/></g>
<circle cx="1038" cy="486" r="9" fill="#2aaee8"/>
<g transform="translate(1038 486)" fill="#fff" stroke="none"><rect x="-3" y="-5" width="1.400" height="9.500"/><rect x="-.8" y="-5" width="1.400" height="9.500"/><rect x="1.800" y="-2" width="1.400" height="6.500"/><rect x="-4.500" y="4" width="9" height="1"/></g>
<ellipse cx="817.500" cy="689.500" rx="4.500" ry="1.500" fill="#c9b8b0" opacity=".8"/>
<defs><linearGradient id="mk" x1="0" y1="0" x2="0" y2="1"><stop offset="0" stop-color="#4da0fb"/><stop offset="1" stop-color="#1276e6"/></linearGradient></defs>
<path d="M817.500 689.500 C815.500 683 808 676 808 668.800 A9.500 9.500 0 0 1 827 668.800 C827 676 819.500 683 817.500 689.500Z" fill="url(#mk)"/>
<path d="M321.500 861 V869 M321.500 865 H387.500 M387.500 861 V869" stroke="#fff" stroke-width="3.500" fill="none" opacity=".8"/>
<path d="M321.500 861.700 V868.300 M321.500 865 H387.500 M387.500 861.700 V868.300" stroke="#1a1a1a" stroke-width="2" fill="none"/>
<path d="M319.500 877 V872 a3 3 0 0 1 3 -3 H336.500 a3 3 0 0 1 3 3 V877Z" fill="#f3f7f7"/><path d="M320.300 877 V872 a2.200 2.200 0 0 1 2.200 -2.200 H327 V877Z" fill="#c3ee9d"/><path d="M327 877 L336 872 V877Z" fill="#1b7bf0"/>
<text x="343.700" y="885" font-size="11.500" font-weight="700" fill="#5f6468" textLength="47">高德地图</text>
<defs><linearGradient id="pg" x1="0" y1="0" x2="0" y2="1"><stop offset="0" stop-color="#ffffff"/><stop offset="1" stop-color="#ececec"/></linearGradient></defs>
<circle cx="353.500" cy="527.500" r="22" fill="#8a96a8" opacity=".35"/>
<circle cx="353.500" cy="526.500" r="21.500" fill="url(#pg)" stroke="#cfd3d8" stroke-width=".8"/>
<path d="M349 515.500 L353.500 511.500 L358 515.500 M349 537.500 L353.500 541.500 L358 537.500 M343 522 L339 526.500 L343 531 M364 522 L368 526.500 L364 531" fill="none" stroke="#d4d4d4" stroke-width="1.500"/>
<rect x="345.500" y="554" width="16.500" height="16.500" rx="2.500" fill="#f3f3f3" stroke="#c9ccd0" stroke-width="1"/>
<circle cx="353.700" cy="562.200" r="2.800" fill="#9a9a9a"/>
<rect x="350.500" y="590" width="6.500" height="152" fill="#fdfdfd" stroke="#c9ccd0" stroke-width=".9"/>
<rect x="350.500" y="590" width="6.500" height="52" fill="#0f96d6"/>
<rect x="346.500" y="578.500" width="14.500" height="12.500" rx="2" fill="#fdfdfd" stroke="#c3c7cc" stroke-width="1"/>
<path d="M350 584.700 H357.500 M353.750 581 V588.500" stroke="#333" stroke-width="1.700"/>
<rect x="346.500" y="637" width="14.500" height="11.500" rx="2" fill="#fdfdfd" stroke="#9fbfd6" stroke-width="1"/>
<path d="M350 642.700 H357.500" stroke="#0f96d6" stroke-width="1.800"/>
<rect x="346.500" y="740" width="14.500" height="12" rx="2" fill="#fdfdfd" stroke="#c3c7cc" stroke-width="1"/>
<path d="M350 746 H357.500" stroke="#555" stroke-width="1.500"/>
</svg>
<div class="abs" style="left:0;top:0;width:1000px;height:387px;border:1px solid #e2e2e2;border-bottom:none"></div>
</div>

  <div class="abs" style="left:1750px;top:138px;width:10px;height:675px;background:#d9d9d9"></div>
  <div class="abs" style="left:1750px;top:579px;width:10px;height:144px;background:#b4b5cd"></div>

  <div class="abs" style="left:20px;top:813px;width:1720px;height:60px;background:#f7f7f7"></div>
  <div class="abs" style="left:20px;top:815px;width:1720px;height:57.500px;background:#fff;border-radius:4px"></div>
  <div class="abs" style="left:816px;top:828px;width:58px;height:34px;background:#3747ae;border-radius:4px;color:#fff;font-size:12px;font-weight:700;line-height:39px;text-align:center;overflow:hidden">保存</div>
  <div class="abs" style="left:878.500px;top:828px;width:69px;height:34px;background:#fff;border:1px solid #ebebeb;border-radius:4px;color:#606060;font-size:12px;line-height:37px;text-align:center;overflow:hidden">下一步</div>
</div>
</body>
</html>
